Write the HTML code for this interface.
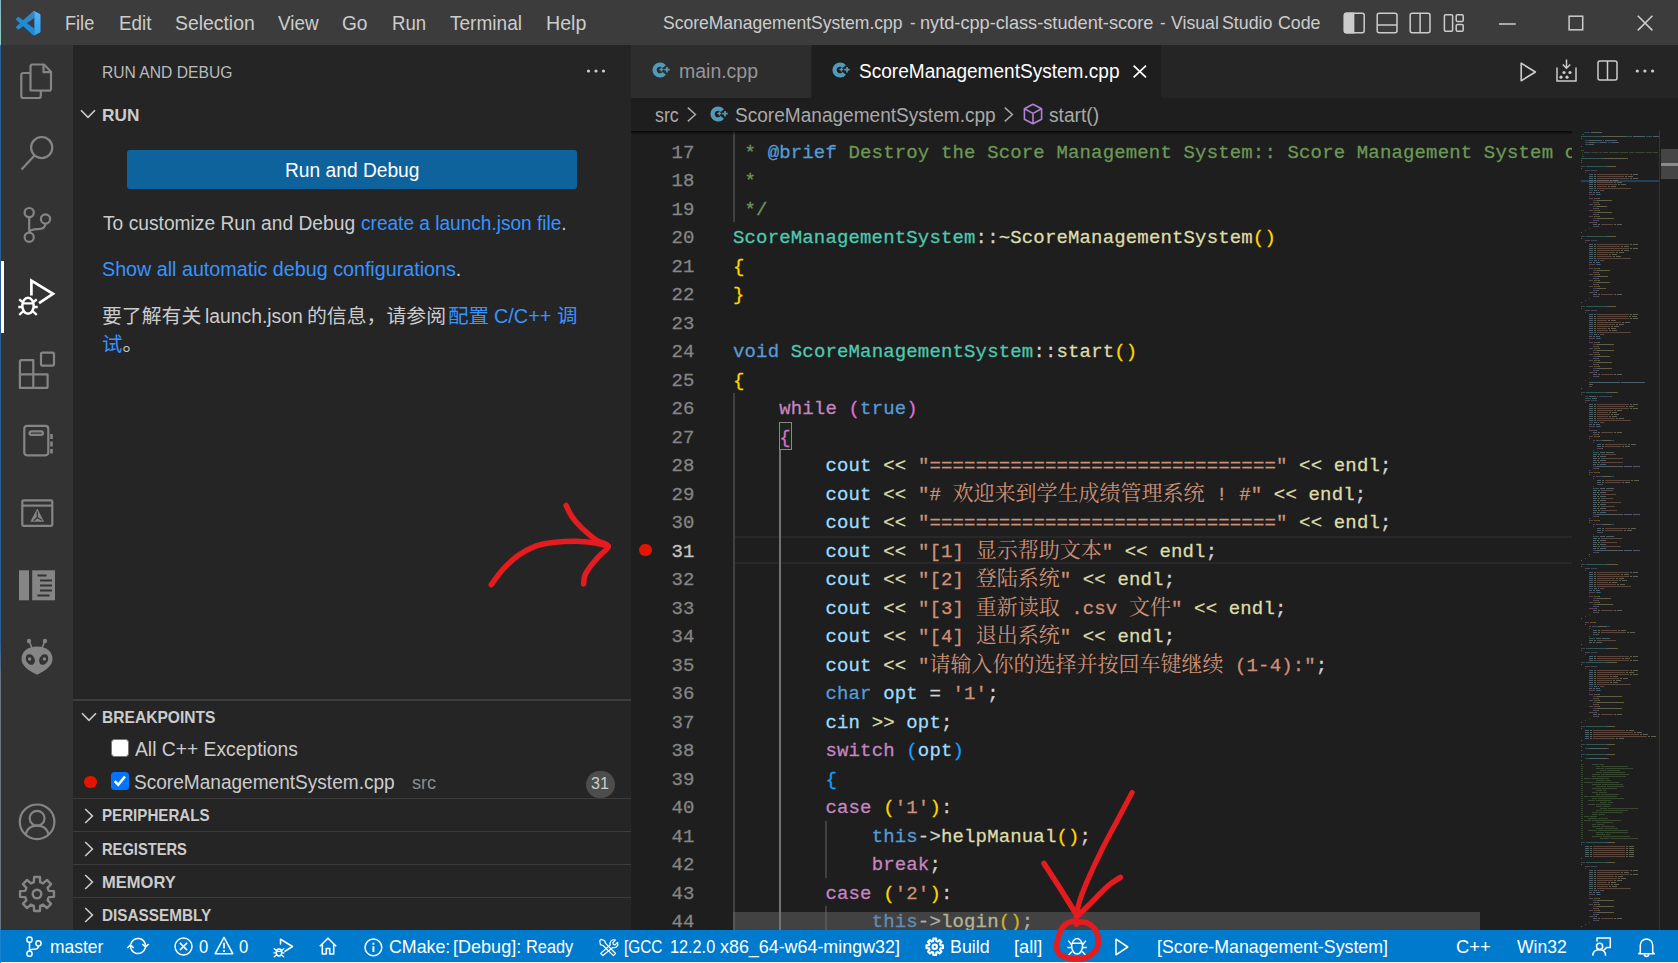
<!DOCTYPE html>
<html lang="en">
<head>
<meta charset="utf-8">
<title>ScoreManagementSystem.cpp - nytd-cpp-class-student-score - Visual Studio Code</title>
<style>
*{box-sizing:border-box;margin:0;padding:0}
html,body{width:1678px;height:963px;overflow:hidden;background:#fff}
body{font-family:"Liberation Sans","Noto Sans CJK SC",sans-serif;color:#ccc;-webkit-font-smoothing:antialiased}
#app{position:absolute;left:0;top:0;width:1678px;height:963px;overflow:hidden;background:#1e1e1e}
.abs{position:absolute}
.t{position:absolute;white-space:nowrap;line-height:1;transform-origin:0 0}
svg{position:absolute;overflow:visible}
/* title bar */
#titlebar{position:absolute;left:0;top:0;width:1678px;height:45px;background:#3c3c3c;z-index:5}
#titlebar .t{color:#cccccc;font-size:19.5px}
/* activity bar */
#activity{position:absolute;left:0;top:44px;width:73px;height:886px;background:#333333}
#winborder{z-index:6;position:absolute;left:0;top:0;width:1px;height:963px;background:linear-gradient(#86b3c6 0,#8fcdbf 44px,#2e5c96 46px,#2e5c96 640px,#6e7480 680px,#6e7480 925px,#1a80d0 931px)}
/* sidebar */
#sidebar{position:absolute;left:73px;top:44px;width:558px;height:886px;background:#252526}
#sidebar .hdr{font-weight:bold;font-size:16px;color:#cccccc}
#sidebar .sep{position:absolute;left:0;width:558px;height:1.5px;background:#3c3c3d}
a{color:#3794ff;text-decoration:none}
/* editor */
#tabs{position:absolute;left:631px;top:44px;width:1047px;height:54px;background:#252526}
#crumbs{position:absolute;left:631px;top:98px;width:1047px;height:33px;background:#1e1e1e}
#code{position:absolute;left:631px;top:131px;width:941px;height:799px;background:#1e1e1e;overflow:hidden}
.ln{position:absolute;left:0;width:941px;height:28.5px;line-height:28.5px;white-space:pre;font-family:"Liberation Mono","Noto Serif CJK SC",monospace;font-size:19px;letter-spacing:0.15px;-webkit-text-stroke:0.28px;color:#d4d4d4}
.ln .n{position:absolute;left:0;width:63.5px;text-align:right;color:#858585}
.ln .c{position:absolute;left:102px}
.zh{font-family:"Noto Serif CJK SC","Liberation Mono",serif;font-size:21px;line-height:1;letter-spacing:0;-webkit-text-stroke:0}
.cm{color:#6a9955}.kw{color:#569cd6}.ty{color:#4ec9b0}.fn{color:#dcdcaa}.ct{color:#c586c0}
.va{color:#9cdcfe}.st{color:#ce9178}.b1{color:#ffd700}.b2{color:#da70d6}.b3{color:#179fff}
.ig{position:absolute;width:1.5px;background:#404040}
/* status */
#status{position:absolute;left:0;top:930px;width:1678px;height:31.5px;background:#007acc}
#status .t{color:#ffffff;font-size:18px}
</style>
</head>
<body>
<div id="app">
<div id="titlebar">
<svg style="left:15.7px;top:10.7px" width="24.5" height="24.5" viewBox="0 0 100 100">
<defs><linearGradient id="vsg" x1="0" y1="0" x2="0" y2="1"><stop offset="0" stop-color="#52b4f5"/><stop offset="1" stop-color="#2aa2f6"/></linearGradient>
<linearGradient id="vsa" x1="1" y1="0" x2="0" y2="1"><stop offset="0" stop-color="#3a86bd"/><stop offset="1" stop-color="#1e8ad6"/></linearGradient></defs>
<path fill="url(#vsa)" d="M75.860.880a6.230 6.230 0 0 0-7.100 1.200L1.350 63.580a4.170 4.170 0 0 0 0 6.160l5.500 5.010a4.160 4.160 0 0 0 5.320.240L75 27.300Z"/>
<path fill="#1c8bdb" d="M1.350 36.420a4.170 4.170 0 0 1 0-6.160l5.500-5.010a4.160 4.160 0 0 1 5.320-.240L75 72.700l1 25-7.240.220Z"/>
<path fill="url(#vsg)" d="M68.760 97.920a6.220 6.220 0 0 0 7.100 1.200l20.600-9.900A6.250 6.250 0 0 0 100 83.580V16.420a6.250 6.250 0 0 0-3.540-5.630L75.860.880a6.230 6.230 0 0 0-7.100 1.200c1.500-1 3.500-.6 6.240 1.400v93.030c-3 2-5 2.600-6.240 1.400Z"/>
</svg>
<div class="t" style="left:65.47px;top:14.00px;font-size:19.5px;color:#cccccc;transform:scaleX(0.9300)">File</div>
<div class="t" style="left:118.73px;top:14.00px;font-size:19.5px;color:#cccccc;transform:scaleX(0.9667)">Edit</div>
<div class="t" style="left:175.01px;top:14.00px;font-size:19.5px;color:#cccccc;transform:scaleX(0.9936)">Selection</div>
<div class="t" style="left:278.00px;top:14.00px;font-size:19.5px;color:#cccccc;transform:scaleX(0.9690)">View</div>
<div class="t" style="left:342.02px;top:14.00px;font-size:19.5px;color:#cccccc;transform:scaleX(0.9800)">Go</div>
<div class="t" style="left:391.64px;top:14.00px;font-size:19.5px;color:#cccccc;transform:scaleX(0.9559)">Run</div>
<div class="t" style="left:450.20px;top:14.00px;font-size:19.5px;color:#cccccc;transform:scaleX(0.9767)">Terminal</div>
<div class="t" style="left:545.79px;top:14.00px;font-size:19.5px;color:#cccccc;transform:scaleX(1.0051)">Help</div>
<div class="t" style="left:663.25px;top:14.00px;font-size:18.5px;color:#cccccc;transform:scaleX(0.9468)">ScoreManagementSystem.cpp</div>
<div class="t" style="left:909.70px;top:14.00px;font-size:18.5px;color:#cccccc;transform:scaleX(0.9000)">-</div>
<div class="t" style="left:920.22px;top:14.00px;font-size:18.5px;color:#cccccc;transform:scaleX(0.9826)">nytd-cpp-class-student-score</div>
<div class="t" style="left:1159.80px;top:14.00px;font-size:18.5px;color:#cccccc;transform:scaleX(0.9000)">-</div>
<div class="t" style="left:1170.90px;top:14.00px;font-size:18.5px;color:#cccccc;transform:scaleX(0.9571)">Visual</div>
<div class="t" style="left:1222.04px;top:14.00px;font-size:18.5px;color:#cccccc;transform:scaleX(0.9608)">Studio</div>
<div class="t" style="left:1277.74px;top:14.00px;font-size:18.5px;color:#cccccc;transform:scaleX(0.9605)">Code</div>
<!-- layout controls -->
<svg style="left:1343px;top:12px" width="22" height="22" viewBox="0 0 22 22" fill="none" stroke="#cccccc" stroke-width="1.5">
<rect x="1.4" y="1.3" width="19.8" height="19.4" rx="2"/><path d="M1.4 3.3a2 2 0 0 1 2-2h7.2v19.4H3.4a2 2 0 0 1-2-2z" fill="#cccccc"/></svg>
<svg style="left:1376px;top:12px" width="22" height="22" viewBox="0 0 22 22" fill="none" stroke="#cccccc" stroke-width="1.5">
<rect x="1.2" y="1.3" width="19.8" height="19.4" rx="2"/><path d="M1.2 13h19.8"/></svg>
<svg style="left:1409px;top:12px" width="22" height="22" viewBox="0 0 22 22" fill="none" stroke="#cccccc" stroke-width="1.5">
<rect x="1.2" y="1.3" width="19.8" height="19.4" rx="2"/><path d="M11.1 1.3v19.4"/></svg>
<svg style="left:1443px;top:12px" width="22" height="22" viewBox="0 0 22 22" fill="none" stroke="#cccccc" stroke-width="1.5">
<rect x="1.4" y="2.8" width="8.2" height="16.4" rx="1.2"/><rect x="13.2" y="2.8" width="7" height="6.6" rx="1.2"/><rect x="13.2" y="12.6" width="7" height="6.6" rx="1.2"/></svg>
<!-- window controls -->
<svg style="left:1499px;top:14px" width="18" height="18" viewBox="0 0 18 18" fill="none" stroke="#cccccc" stroke-width="1.5"><path d="M0 10h16.8"/></svg>
<svg style="left:1568px;top:15px" width="16" height="16" viewBox="0 0 16 16" fill="none" stroke="#cccccc" stroke-width="1.5"><rect x="1.1" y="1.2" width="13.6" height="13.6"/></svg>
<svg style="left:1637px;top:15px" width="16" height="16" viewBox="0 0 16 16" fill="none" stroke="#cccccc" stroke-width="1.6"><path d="M0.8 0.8l14.6 14.6M15.4 0.8L0.8 15.4"/></svg>
</div>
<div id="activity">
<div class="abs" style="left:1px;top:217px;width:3px;height:72px;background:#ffffff"></div>
<!-- files -->
<svg style="left:19px;top:18px" width="36" height="38" viewBox="0 0 36 38" fill="none" stroke="#858585" stroke-width="2.2" stroke-linejoin="round">
<path d="M11.5 28.5V4.5a2 2 0 0 1 2-2H25l7 7.2v17a2 2 0 0 1-2 2z"/><path d="M24.5 2.8v7.4h7.2"/><path d="M11 11H4.3a2 2 0 0 0-2 2v21a2 2 0 0 0 2 2h15.5a2 2 0 0 0 2-2v-5"/></svg>
<!-- search -->
<svg style="left:19px;top:90px" width="38" height="38" viewBox="0 0 38 38" fill="none" stroke="#858585" stroke-width="2.2">
<circle cx="22.7" cy="13.6" r="10.6"/><path d="M15.5 21.5L2.5 35.5"/></svg>
<!-- scm -->
<svg style="left:19px;top:162px" width="36" height="40" viewBox="0 0 36 40" fill="none" stroke="#858585" stroke-width="2.2">
<circle cx="10.2" cy="6.6" r="4.6"/><circle cx="26.5" cy="13" r="4.6"/><circle cx="10.2" cy="31.3" r="4.6"/><path d="M10.2 11.2v15.5M26.5 17.6c0 4.5-3.5 5.6-8 5.6s-8.3 .8-8.3 3.5"/></svg>
<!-- debug (active) -->
<svg style="left:17px;top:232px" width="40" height="44" viewBox="0 0 40 44" fill="none" stroke="#ffffff" stroke-width="2.700" stroke-linejoin="miter" stroke-linecap="butt">
<path d="M14.400 19.500V4.600L36 17.800 22 27.200"/>
<ellipse cx="11" cy="29.800" rx="5.700" ry="8" stroke-width="2.500"/><path d="M5.800 27.300h10.400M2.200 23.300l4 3.200M19.800 23.300l-4 3.200M1.300 31h4.200M16.500 31h4.200M2.200 38.800l4.200-3.600M19.800 38.800l-4.200-3.600" stroke-width="2.300"/></svg>
<!-- extensions -->
<svg style="left:18px;top:305px" width="40" height="40" viewBox="0 0 40 40" fill="none" stroke="#858585" stroke-width="2.2" stroke-linejoin="round">
<path d="M15.3 11.2H3.4a1.5 1.5 0 0 0-1.5 1.5v26.2h26.2a1.5 1.5 0 0 0 1.500-1.500V25.300H15.300zM15.300 25.300H1.900M15.300 25.300v13.600"/><rect x="23" y="3.600" width="13" height="13" rx="1.500"/></svg>
<!-- notebook -->
<svg style="left:22px;top:379px" width="34" height="36" viewBox="0 0 34 36" fill="none" stroke="#858585" stroke-width="2.2">
<rect x="2.300" y="2.800" width="24" height="29.500" rx="3"/><rect x="7.500" y="8.300" width="13.500" height="3.600" rx="1.800"/><path d="M29.500 11v5M29.500 18.500v5M29.500 26v4.500" stroke-width="2.600"/></svg>
<!-- cmake -->
<svg style="left:20px;top:454px" width="36" height="30" viewBox="0 0 36 30" fill="none" stroke="#858585" stroke-width="2.200">
<rect x="2.300" y="2.300" width="30" height="25.500" rx="1.500"/><path d="M2.300 7.600h30"/><path d="M17.300 10.500l6.800 13.300H10.300z" fill="#858585" stroke="none"/><path d="M17.300 13.500v6l-3.500 3.200M17.300 19.500l4.500 2.800" stroke="#333333" stroke-width="1.200"/></svg>
<!-- book -->
<svg style="left:19px;top:526px" width="38" height="32" viewBox="0 0 38 32" fill="#858585" stroke="none">
<rect x="0" y="0.300" width="10" height="30"/><rect x="13.200" y="0.300" width="22.800" height="30"/><path d="M18.500 5.500h9M21 10.500h12M21 15.500h12M21 20.500h12M18.500 25.500h12" stroke="#333333" stroke-width="2.200"/></svg>
<!-- platformio -->
<svg style="left:20px;top:594px" width="34" height="38" viewBox="0 0 34 38" fill="#858585" stroke="none">
<path d="M17 8.500c9.500 0 15.500 5 15.500 12.500 0 6-6 11.500-15.500 15.700C7.500 32.500 1.500 27 1.500 21 1.500 13.500 7.500 8.500 17 8.500z"/><circle cx="9" cy="3" r="2.200"/><circle cx="25" cy="3" r="2.200"/><path d="M9 3l3 7M25 3l-3 7" stroke="#858585" stroke-width="1.600"/>
<ellipse cx="10.300" cy="21.500" rx="4.200" ry="5.600" transform="rotate(-28 10.300 21.500)" fill="#333333"/><ellipse cx="23.700" cy="21.500" rx="4.200" ry="5.600" transform="rotate(28 23.700 21.500)" fill="#333333"/><circle cx="9.600" cy="21" r="1.700"/><circle cx="24.400" cy="21" r="1.700"/></svg>
<!-- account -->
<svg style="left:17px;top:758px" width="40" height="40" viewBox="0 0 40 40" fill="none" stroke="#858585" stroke-width="2.200">
<circle cx="20.100" cy="19.800" r="17.300"/><circle cx="20.100" cy="16.200" r="7.400"/><path d="M8.500 32.500c1.500-6 6-8.900 11.600-8.900s10.100 2.900 11.600 8.900"/></svg>
<!-- gear -->
<svg style="left:17.100px;top:829.700px" width="40" height="40" viewBox="-20 -20 40 40" fill="none" stroke="#858585" stroke-width="2.400" stroke-linejoin="round">
<path d="M-3.14 -11.79L-2.91 -16.95L2.91 -16.95L3.14 -11.79L6.12 -10.55L9.93 -14.04L14.04 -9.93L10.55 -6.12L11.79 -3.14L16.95 -2.91L16.95 2.91L11.79 3.14L10.55 6.12L14.04 9.93L9.93 14.04L6.12 10.55L3.14 11.79L2.91 16.95L-2.91 16.95L-3.14 11.79L-6.12 10.55L-9.93 14.04L-14.04 9.93L-10.55 6.12L-11.79 3.14L-16.95 2.91L-16.95 -2.91L-11.79 -3.14L-10.55 -6.12L-14.04 -9.93L-9.93 -14.04L-6.12 -10.55Z"/>
<circle cx="0" cy="0" r="4.300"/></svg>
</div>
<div id="winborder"></div>
<div id="sidebar">
<!-- header dots -->
<svg style="left:513px;top:23px" width="20" height="8" viewBox="0 0 20 8" fill="#cccccc"><circle cx="2.500" cy="4" r="1.600"/><circle cx="10" cy="4" r="1.600"/><circle cx="17.500" cy="4" r="1.600"/></svg>
<!-- RUN chevron -->
<svg style="left:7px;top:65px" width="16" height="10" viewBox="0 0 16 10" fill="none" stroke="#cccccc" stroke-width="1.600"><path d="M1 1.200l7 7.200 7-7.200"/></svg>
<div class="abs" style="left:54px;top:106px;width:450px;height:38.700px;background:#0e639c;border-radius:3px"></div>
<!-- breakpoints -->
<div class="sep" style="top:655px"></div>
<svg style="left:7.500px;top:668px" width="16" height="10" viewBox="0 0 16 10" fill="none" stroke="#cccccc" stroke-width="1.600"><path d="M1 1.200l7 7.200 7-7.200"/></svg>
<div class="abs" style="left:38.300px;top:695.300px;width:17.700px;height:17.700px;background:#ffffff;border:1.500px solid #767676;border-radius:3.500px"></div>
<div class="abs" style="left:11.300px;top:731.800px;width:12.600px;height:12.600px;border-radius:50%;background:#e51400"></div>
<div class="abs" style="left:38.300px;top:728.200px;width:17.700px;height:17.700px;background:#0075ff;border-radius:3.500px"></div>
<svg style="left:38.300px;top:728.200px" width="17.700" height="17.700" viewBox="0 0 18 18" fill="none" stroke="#ffffff" stroke-width="2.600"><path d="M3.800 9.200l3.600 3.800 6.800-8.400"/></svg>
<div class="abs" style="left:513px;top:726.500px;width:29px;height:27px;border-radius:13.500px;background:#4d4d4d"></div>
<div class="sep" style="top:753.700px"></div>
<svg style="left:11px;top:763.500px" width="10" height="16" viewBox="0 0 10 16" fill="none" stroke="#cccccc" stroke-width="1.600"><path d="M1.200 1l7.200 7-7.200 7"/></svg>
<div class="sep" style="top:786.700px"></div>
<svg style="left:11px;top:796.500px" width="10" height="16" viewBox="0 0 10 16" fill="none" stroke="#cccccc" stroke-width="1.600"><path d="M1.200 1l7.200 7-7.200 7"/></svg>
<div class="sep" style="top:819.700px"></div>
<svg style="left:11px;top:829.500px" width="10" height="16" viewBox="0 0 10 16" fill="none" stroke="#cccccc" stroke-width="1.600"><path d="M1.200 1l7.200 7-7.200 7"/></svg>
<div class="sep" style="top:852.700px"></div>
<svg style="left:11px;top:862.500px" width="10" height="16" viewBox="0 0 10 16" fill="none" stroke="#cccccc" stroke-width="1.600"><path d="M1.200 1l7.200 7-7.200 7"/></svg>
</div>
<div class="t" style="left:102.35px;top:64.00px;font-size:16.5px;color:#bbbbbb;transform:scaleX(0.9478)">RUN AND DEBUG</div>
<div class="t" style="left:102.26px;top:107.00px;font-size:16.5px;color:#cccccc;transform:scaleX(1.0441);font-weight:700">RUN</div>
<div class="t" style="left:284.82px;top:161.00px;font-size:19.5px;color:#ffffff;transform:scaleX(0.9844)">Run and Debug</div>
<div class="t" style="left:103.30px;top:214.00px;font-size:19.5px;color:#cccccc;transform:scaleX(0.9855)">To customize Run and Debug</div>
<div class="t" style="left:360.80px;top:214.00px;font-size:19.5px;color:#cccccc;transform:scaleX(0.9780)"><a>create a launch.json file</a>.</div>
<div class="t" style="left:102.29px;top:260.00px;font-size:19.5px;color:#cccccc;transform:scaleX(1.0105)"><a>Show all automatic debug configurations</a>.</div>
<div class="t" style="left:102.28px;top:307.00px;font-size:19.5px;color:#cccccc;transform:scaleX(1.0188)">要了解有关</div>
<div class="t" style="left:204.91px;top:307.00px;font-size:19.5px;color:#cccccc;transform:scaleX(0.9907)">launch.json</div>
<div class="t" style="left:306.78px;top:307.00px;font-size:19.5px;color:#cccccc;transform:scaleX(1.0187)">的信息，请参阅</div>
<div class="t" style="left:448.35px;top:307.00px;font-size:19.5px;color:#3794ff;transform:scaleX(1.0541)">配置</div>
<div class="t" style="left:493.58px;top:307.00px;font-size:19.5px;color:#3794ff;transform:scaleX(1.0182)">C/C++</div>
<div class="t" style="left:557.40px;top:307.00px;font-size:19.5px;color:#3794ff;transform:scaleX(1.0500)">调</div>
<div class="t" style="left:102.25px;top:335.00px;font-size:19.5px;color:#cccccc;transform:scaleX(1.0462)"><a>试</a>。</div>
<div class="t" style="left:102.36px;top:709.00px;font-size:16.5px;color:#cccccc;transform:scaleX(0.9445);font-weight:700">BREAKPOINTS</div>
<div class="t" style="left:134.60px;top:740.00px;font-size:19.5px;color:#cccccc;transform:scaleX(0.9890)">All C++ Exceptions</div>
<div class="t" style="left:133.62px;top:773.00px;font-size:19.5px;color:#cccccc;transform:scaleX(0.9777)">ScoreManagementSystem.cpp</div>
<div class="t" style="left:411.70px;top:775.00px;font-size:17.5px;color:#8e8e8e;transform:scaleX(1.0348)">src</div>
<div class="t" style="left:591.40px;top:775.00px;font-size:16.5px;color:#cccccc;transform:scaleX(0.9778)">31</div>
<div class="t" style="left:102.38px;top:807.00px;font-size:16.5px;color:#cccccc;transform:scaleX(0.9172);font-weight:700">PERIPHERALS</div>
<div class="t" style="left:102.41px;top:841.00px;font-size:16.5px;color:#cccccc;transform:scaleX(0.8894);font-weight:700">REGISTERS</div>
<div class="t" style="left:102.30px;top:874.00px;font-size:16.5px;color:#cccccc;transform:scaleX(1.0014);font-weight:700">MEMORY</div>
<div class="t" style="left:102.37px;top:907.00px;font-size:16.5px;color:#cccccc;transform:scaleX(0.9282);font-weight:700">DISASSEMBLY</div>
<div id="tabs">
<div class="abs" style="left:0;top:1px;width:179.700px;height:52.500px;background:#2d2d2d"></div>
<div class="abs" style="left:180.700px;top:1px;width:349px;height:53px;background:#1e1e1e"></div>
<!-- cpp icons -->
<svg style="left:21.300px;top:18.300px" width="19" height="16" viewBox="0 0 19 16"><path d="M12.290 4.640A5.450 5.450 0 1 0 12.290 11.360" fill="none" stroke="#519aba" stroke-width="4.300"/><path d="M7.400 7.500h4M9.400 5.500v4" stroke="#519aba" stroke-width="1.300"/><path d="M12.300 7.700h5.400M15 5v5.400" stroke="#519aba" stroke-width="1.700"/></svg>
<svg style="left:201.400px;top:18.300px" width="19" height="16" viewBox="0 0 19 16"><path d="M12.290 4.640A5.450 5.450 0 1 0 12.290 11.360" fill="none" stroke="#519aba" stroke-width="4.300"/><path d="M7.400 7.500h4M9.400 5.500v4" stroke="#519aba" stroke-width="1.300"/><path d="M12.300 7.700h5.400M15 5v5.400" stroke="#519aba" stroke-width="1.700"/></svg>
<!-- close -->
<svg style="left:502.400px;top:21.300px" width="14" height="13" viewBox="0 0 14 13" fill="none" stroke="#ffffff" stroke-width="1.700"><path d="M0.600 0.600l12.400 11.800M13 0.600L0.600 12.400"/></svg>
<!-- actions -->
<svg style="left:889px;top:17.500px" width="17" height="20" viewBox="0 0 17 20" fill="none" stroke="#cccccc" stroke-width="1.600" stroke-linejoin="round"><path d="M1.200 1.200v17.600L15.400 10z"/></svg>
<svg style="left:925px;top:14.500px" width="21" height="24" viewBox="0 0 21 24" fill="none" stroke="#cccccc" stroke-width="1.500"><path d="M1 8.500v13.500h19V8.500"/><path d="M10.500 0.500v8.500M6.800 5.500l3.700 3.700 3.700-3.700"/><g fill="#cccccc" stroke="none"><circle cx="8" cy="13.500" r="1.600"/><circle cx="14" cy="13.500" r="1.600"/><circle cx="5" cy="18.200" r="1.600"/><circle cx="11" cy="18.200" r="1.600"/></g></svg>
<svg style="left:965.500px;top:16px" width="21" height="21" viewBox="0 0 21 21" fill="none" stroke="#cccccc" stroke-width="1.500"><rect x="1" y="1" width="19" height="19" rx="2"/><path d="M10.500 1v19"/></svg>
<svg style="left:1004px;top:24px" width="20" height="6" viewBox="0 0 20 6" fill="#cccccc"><circle cx="2.300" cy="3" r="1.600"/><circle cx="9.900" cy="3" r="1.600"/><circle cx="17.600" cy="3" r="1.600"/></svg>
</div>
<div id="crumbs">
<svg style="left:56px;top:8.600px" width="10" height="15" viewBox="0 0 10 15" fill="none" stroke="#a9a9a9" stroke-width="1.500"><path d="M0.800 0.600l7.600 6.900-7.600 6.900"/></svg>
<svg style="left:78.700px;top:8.150px" width="19" height="16" viewBox="0 0 19 16"><path d="M12.290 4.640A5.450 5.450 0 1 0 12.290 11.360" fill="none" stroke="#519aba" stroke-width="4.300"/><path d="M7.400 7.500h4M9.400 5.500v4" stroke="#519aba" stroke-width="1.300"/><path d="M12.300 7.700h5.400M15 5v5.400" stroke="#519aba" stroke-width="1.700"/></svg>
<svg style="left:373px;top:8.600px" width="10" height="15" viewBox="0 0 10 15" fill="none" stroke="#a9a9a9" stroke-width="1.500"><path d="M0.800 0.600l7.600 6.900-7.600 6.900"/></svg>
<svg style="left:391.500px;top:5px" width="20" height="22" viewBox="0 0 20 22" fill="none" stroke="#b180d7" stroke-width="1.600" stroke-linejoin="round"><path d="M10 1.200L18.600 5.800v10.400L10 20.800 1.400 16.200V5.800z"/><path d="M1.400 5.800L10 10.400l8.600-4.600M10 10.400v10.400"/></svg>
</div>

<div id="code">
<div class="abs" style="left:102px;top:404.75px;width:839px;height:28.5px;border-top:2px solid #282828;border-bottom:2px solid #282828"></div>
<div class="ig" style="left:102px;top:-22.75px;height:114.00px;background:#404040"></div>
<div class="ig" style="left:102px;top:262.25px;height:541.50px;background:#404040"></div>
<div class="ig" style="left:148.2px;top:319.25px;height:484.50px;background:#707070"></div>
<div class="ig" style="left:194.4px;top:689.75px;height:57.00px;background:#404040"></div>
<div class="ig" style="left:194.4px;top:775.25px;height:28.50px;background:#404040"></div>
<div class="abs" style="left:148px;top:290.75px;width:12.500px;height:28.500px;border:1px solid #888888;background:rgba(0,100,0,0.1)"></div>
<div class="abs" style="left:8.300px;top:412.75px;width:12.600px;height:12.600px;border-radius:50%;background:#e51400"></div>
<div class="ln" style="top:7.90px"><span class="n">17</span><span class="c"><span class="cm"> * </span><span class="kw">@brief</span><span class="cm"> Destroy the Score Management System:: Score Management System c</span></span></div>
<div class="ln" style="top:36.40px"><span class="n">18</span><span class="c"><span class="cm"> *</span></span></div>
<div class="ln" style="top:64.90px"><span class="n">19</span><span class="c"><span class="cm"> */</span></span></div>
<div class="ln" style="top:93.40px"><span class="n">20</span><span class="c"><span class="ty">ScoreManagementSystem</span>::<span class="fn">~ScoreManagementSystem</span><span class="b1">()</span></span></div>
<div class="ln" style="top:121.90px"><span class="n">21</span><span class="c"><span class="b1">{</span></span></div>
<div class="ln" style="top:150.40px"><span class="n">22</span><span class="c"><span class="b1">}</span></span></div>
<div class="ln" style="top:178.90px"><span class="n">23</span><span class="c"></span></div>
<div class="ln" style="top:207.40px"><span class="n">24</span><span class="c"><span class="kw">void</span> <span class="ty">ScoreManagementSystem</span>::<span class="fn">start</span><span class="b1">()</span></span></div>
<div class="ln" style="top:235.90px"><span class="n">25</span><span class="c"><span class="b1">{</span></span></div>
<div class="ln" style="top:264.40px"><span class="n">26</span><span class="c">    <span class="ct">while</span> <span class="b2">(</span><span class="kw">true</span><span class="b2">)</span></span></div>
<div class="ln" style="top:292.90px"><span class="n">27</span><span class="c">    <span class="b2">{</span></span></div>
<div class="ln" style="top:321.40px"><span class="n">28</span><span class="c">        <span class="va">cout</span> <span class="fn">&lt;&lt;</span> <span class="st">"=============================="</span> <span class="fn">&lt;&lt;</span> <span class="fn">endl</span>;</span></div>
<div class="ln" style="top:349.90px"><span class="n">29</span><span class="c">        <span class="va">cout</span> <span class="fn">&lt;&lt;</span> <span class="st">"# <span class="zh">欢迎来到学生成绩管理系统</span> ! #"</span> <span class="fn">&lt;&lt;</span> <span class="fn">endl</span>;</span></div>
<div class="ln" style="top:378.40px"><span class="n">30</span><span class="c">        <span class="va">cout</span> <span class="fn">&lt;&lt;</span> <span class="st">"=============================="</span> <span class="fn">&lt;&lt;</span> <span class="fn">endl</span>;</span></div>
<div class="ln" style="top:406.90px"><span class="n" style="color:#c6c6c6">31</span><span class="c">        <span class="va">cout</span> <span class="fn">&lt;&lt;</span> <span class="st">"[1] <span class="zh">显示帮助文本</span>"</span> <span class="fn">&lt;&lt;</span> <span class="fn">endl</span>;</span></div>
<div class="ln" style="top:435.40px"><span class="n">32</span><span class="c">        <span class="va">cout</span> <span class="fn">&lt;&lt;</span> <span class="st">"[2] <span class="zh">登陆系统</span>"</span> <span class="fn">&lt;&lt;</span> <span class="fn">endl</span>;</span></div>
<div class="ln" style="top:463.90px"><span class="n">33</span><span class="c">        <span class="va">cout</span> <span class="fn">&lt;&lt;</span> <span class="st">"[3] <span class="zh">重新读取</span> .csv <span class="zh">文件</span>"</span> <span class="fn">&lt;&lt;</span> <span class="fn">endl</span>;</span></div>
<div class="ln" style="top:492.40px"><span class="n">34</span><span class="c">        <span class="va">cout</span> <span class="fn">&lt;&lt;</span> <span class="st">"[4] <span class="zh">退出系统</span>"</span> <span class="fn">&lt;&lt;</span> <span class="fn">endl</span>;</span></div>
<div class="ln" style="top:520.90px"><span class="n">35</span><span class="c">        <span class="va">cout</span> <span class="fn">&lt;&lt;</span> <span class="st">"<span class="zh">请输入你的选择并按回车键继续</span> (1-4):"</span>;</span></div>
<div class="ln" style="top:549.40px"><span class="n">36</span><span class="c">        <span class="kw">char</span> <span class="va">opt</span> = <span class="st">'1'</span>;</span></div>
<div class="ln" style="top:577.90px"><span class="n">37</span><span class="c">        <span class="va">cin</span> <span class="fn">&gt;&gt;</span> <span class="va">opt</span>;</span></div>
<div class="ln" style="top:606.40px"><span class="n">38</span><span class="c">        <span class="ct">switch</span> <span class="b3">(</span><span class="va">opt</span><span class="b3">)</span></span></div>
<div class="ln" style="top:634.90px"><span class="n">39</span><span class="c">        <span class="b3">{</span></span></div>
<div class="ln" style="top:663.40px"><span class="n">40</span><span class="c">        <span class="ct">case</span> <span class="b1">(</span><span class="st">'1'</span><span class="b1">)</span>:</span></div>
<div class="ln" style="top:691.90px"><span class="n">41</span><span class="c">            <span class="kw">this</span>-&gt;<span class="fn">helpManual</span><span class="b1">()</span>;</span></div>
<div class="ln" style="top:720.40px"><span class="n">42</span><span class="c">            <span class="ct">break</span>;</span></div>
<div class="ln" style="top:748.90px"><span class="n">43</span><span class="c">        <span class="ct">case</span> <span class="b1">(</span><span class="st">'2'</span><span class="b1">)</span>:</span></div>
<div class="ln" style="top:777.40px"><span class="n">44</span><span class="c">            <span class="kw">this</span>-&gt;<span class="fn">login</span><span class="b1">()</span>;</span></div>
<div class="abs" style="left:0;top:0;width:941px;height:4px;background:linear-gradient(rgba(0,0,0,0.75),rgba(0,0,0,0))"></div>
<div class="abs" style="left:102px;top:781px;width:747px;height:18px;background:rgba(121,121,121,0.400)"></div>
</div>
<div class="t" style="left:678.80px;top:62.00px;font-size:19.5px;color:#969696;transform:scaleX(0.9987)">main.cpp</div>
<div class="t" style="left:858.52px;top:62.00px;font-size:19.5px;color:#ffffff;transform:scaleX(0.9770)">ScoreManagementSystem.cpp</div>
<div class="t" style="left:655.00px;top:106.00px;font-size:19.5px;color:#a9a9a9;transform:scaleX(0.9154)">src</div>
<div class="t" style="left:735.42px;top:106.00px;font-size:19.5px;color:#a9a9a9;transform:scaleX(0.9777)">ScoreManagementSystem.cpp</div>
<div class="t" style="left:1048.80px;top:106.00px;font-size:19.5px;color:#a9a9a9;transform:scaleX(0.9840)">start()</div>
<div id="minimap" class="abs" style="left:1573px;top:131px;width:86px;height:799px;background:#1e1e1e;overflow:hidden">
<svg style="left:0;top:0" width="86" height="799" viewBox="0 0 86 799" shape-rendering="crispEdges">
<rect x="8" y="48.500" width="78" height="2" fill="#233f5d"/>
<g opacity="0.340">
<rect x="11" y="1" width="6" height="1.400" fill="#569cd6"/>
<rect x="18" y="1" width="11" height="1.400" fill="#d4d4d4"/>
<rect x="9" y="3" width="2" height="1.400" fill="#6a9955"/>
<rect x="8" y="5" width="21" height="1.400" fill="#4ec9b0"/>
<rect x="29" y="5" width="2" height="1.400" fill="#d4d4d4"/>
<rect x="31" y="5" width="21" height="1.400" fill="#dcdcaa"/>
<rect x="52" y="5" width="1" height="1.400" fill="#ffd700"/>
<rect x="53" y="5" width="6" height="1.400" fill="#4ec9b0"/>
<rect x="60" y="5" width="12" height="1.400" fill="#9cdcfe"/>
<rect x="73" y="5" width="6" height="1.400" fill="#4ec9b0"/>
<rect x="80" y="5" width="6" height="1.400" fill="#9cdcfe"/>
<rect x="8" y="7" width="1" height="1.400" fill="#ffd700"/>
<rect x="12" y="9" width="4" height="1.400" fill="#569cd6"/>
<rect x="16" y="9" width="2" height="1.400" fill="#d4d4d4"/>
<rect x="18" y="9" width="11" height="1.400" fill="#9cdcfe"/>
<rect x="30" y="9" width="1" height="1.400" fill="#d4d4d4"/>
<rect x="32" y="9" width="11" height="1.400" fill="#9cdcfe"/>
<rect x="43" y="9" width="1" height="1.400" fill="#d4d4d4"/>
<rect x="12" y="11" width="4" height="1.400" fill="#569cd6"/>
<rect x="16" y="11" width="2" height="1.400" fill="#d4d4d4"/>
<rect x="18" y="11" width="4" height="1.400" fill="#dcdcaa"/>
<rect x="22" y="11" width="1" height="1.400" fill="#da70d6"/>
<rect x="23" y="11" width="4" height="1.400" fill="#569cd6"/>
<rect x="27" y="11" width="2" height="1.400" fill="#d4d4d4"/>
<rect x="29" y="11" width="5" height="1.400" fill="#9cdcfe"/>
<rect x="35" y="11" width="4" height="1.400" fill="#569cd6"/>
<rect x="39" y="11" width="2" height="1.400" fill="#d4d4d4"/>
<rect x="41" y="11" width="4" height="1.400" fill="#9cdcfe"/>
<rect x="45" y="11" width="1" height="1.400" fill="#da70d6"/>
<rect x="12" y="13" width="4" height="1.400" fill="#569cd6"/>
<rect x="16" y="13" width="2" height="1.400" fill="#d4d4d4"/>
<rect x="18" y="13" width="2" height="1.400" fill="#9cdcfe"/>
<rect x="20" y="13" width="1" height="1.400" fill="#d4d4d4"/>
<rect x="8" y="15" width="1" height="1.400" fill="#ffd700"/>
<rect x="8" y="19" width="3" height="1.400" fill="#6a9955"/>
<rect x="9" y="21" width="1" height="1.400" fill="#6a9955"/>
<rect x="11" y="21" width="6" height="1.400" fill="#569cd6"/>
<rect x="18" y="21" width="7" height="1.400" fill="#6a9955"/>
<rect x="26" y="21" width="3" height="1.400" fill="#6a9955"/>
<rect x="30" y="21" width="5" height="1.400" fill="#6a9955"/>
<rect x="36" y="21" width="10" height="1.400" fill="#6a9955"/>
<rect x="47" y="21" width="8" height="1.400" fill="#6a9955"/>
<rect x="56" y="21" width="5" height="1.400" fill="#6a9955"/>
<rect x="62" y="21" width="10" height="1.400" fill="#6a9955"/>
<rect x="73" y="21" width="6" height="1.400" fill="#6a9955"/>
<rect x="80" y="21" width="5" height="1.400" fill="#6a9955"/>
<rect x="9" y="23" width="1" height="1.400" fill="#6a9955"/>
<rect x="9" y="25" width="2" height="1.400" fill="#6a9955"/>
<rect x="8" y="27" width="21" height="1.400" fill="#4ec9b0"/>
<rect x="29" y="27" width="2" height="1.400" fill="#d4d4d4"/>
<rect x="31" y="27" width="22" height="1.400" fill="#dcdcaa"/>
<rect x="53" y="27" width="2" height="1.400" fill="#ffd700"/>
<rect x="8" y="29" width="1" height="1.400" fill="#ffd700"/>
<rect x="8" y="31" width="1" height="1.400" fill="#ffd700"/>
<rect x="8" y="35" width="4" height="1.400" fill="#569cd6"/>
<rect x="13" y="35" width="21" height="1.400" fill="#4ec9b0"/>
<rect x="34" y="35" width="2" height="1.400" fill="#d4d4d4"/>
<rect x="36" y="35" width="5" height="1.400" fill="#dcdcaa"/>
<rect x="41" y="35" width="2" height="1.400" fill="#ffd700"/>
<rect x="8" y="37" width="1" height="1.400" fill="#ffd700"/>
<rect x="12" y="39" width="5" height="1.400" fill="#c586c0"/>
<rect x="18" y="39" width="1" height="1.400" fill="#da70d6"/>
<rect x="19" y="39" width="4" height="1.400" fill="#569cd6"/>
<rect x="23" y="39" width="1" height="1.400" fill="#da70d6"/>
<rect x="12" y="41" width="1" height="1.400" fill="#da70d6"/>
<rect x="16" y="43" width="4" height="1.400" fill="#9cdcfe"/>
<rect x="21" y="43" width="2" height="1.400" fill="#dcdcaa"/>
<rect x="24" y="43" width="32" height="1.400" fill="#ce9178"/>
<rect x="57" y="43" width="2" height="1.400" fill="#dcdcaa"/>
<rect x="60" y="43" width="4" height="1.400" fill="#dcdcaa"/>
<rect x="64" y="43" width="1" height="1.400" fill="#d4d4d4"/>
<rect x="16" y="45" width="4" height="1.400" fill="#9cdcfe"/>
<rect x="21" y="45" width="2" height="1.400" fill="#dcdcaa"/>
<rect x="24" y="45" width="27" height="1.400" fill="#ce9178"/>
<rect x="52" y="45" width="2" height="1.400" fill="#dcdcaa"/>
<rect x="55" y="45" width="4" height="1.400" fill="#dcdcaa"/>
<rect x="59" y="45" width="1" height="1.400" fill="#d4d4d4"/>
<rect x="16" y="47" width="4" height="1.400" fill="#9cdcfe"/>
<rect x="21" y="47" width="2" height="1.400" fill="#dcdcaa"/>
<rect x="24" y="47" width="32" height="1.400" fill="#ce9178"/>
<rect x="57" y="47" width="2" height="1.400" fill="#dcdcaa"/>
<rect x="60" y="47" width="4" height="1.400" fill="#dcdcaa"/>
<rect x="64" y="47" width="1" height="1.400" fill="#d4d4d4"/>
<rect x="16" y="49" width="4" height="1.400" fill="#9cdcfe"/>
<rect x="21" y="49" width="2" height="1.400" fill="#dcdcaa"/>
<rect x="24" y="49" width="12" height="1.400" fill="#ce9178"/>
<rect x="37" y="49" width="2" height="1.400" fill="#dcdcaa"/>
<rect x="40" y="49" width="4" height="1.400" fill="#dcdcaa"/>
<rect x="44" y="49" width="1" height="1.400" fill="#d4d4d4"/>
<rect x="16" y="51" width="4" height="1.400" fill="#9cdcfe"/>
<rect x="21" y="51" width="2" height="1.400" fill="#dcdcaa"/>
<rect x="24" y="51" width="16" height="1.400" fill="#ce9178"/>
<rect x="41" y="51" width="2" height="1.400" fill="#dcdcaa"/>
<rect x="44" y="51" width="4" height="1.400" fill="#dcdcaa"/>
<rect x="48" y="51" width="1" height="1.400" fill="#d4d4d4"/>
<rect x="16" y="53" width="4" height="1.400" fill="#9cdcfe"/>
<rect x="21" y="53" width="2" height="1.400" fill="#dcdcaa"/>
<rect x="24" y="53" width="20" height="1.400" fill="#ce9178"/>
<rect x="45" y="53" width="2" height="1.400" fill="#dcdcaa"/>
<rect x="48" y="53" width="4" height="1.400" fill="#dcdcaa"/>
<rect x="52" y="53" width="1" height="1.400" fill="#d4d4d4"/>
<rect x="16" y="55" width="4" height="1.400" fill="#9cdcfe"/>
<rect x="21" y="55" width="2" height="1.400" fill="#dcdcaa"/>
<rect x="24" y="55" width="10" height="1.400" fill="#ce9178"/>
<rect x="35" y="55" width="2" height="1.400" fill="#dcdcaa"/>
<rect x="38" y="55" width="4" height="1.400" fill="#dcdcaa"/>
<rect x="42" y="55" width="1" height="1.400" fill="#d4d4d4"/>
<rect x="16" y="57" width="4" height="1.400" fill="#9cdcfe"/>
<rect x="21" y="57" width="2" height="1.400" fill="#dcdcaa"/>
<rect x="24" y="57" width="34" height="1.400" fill="#ce9178"/>
<rect x="16" y="59" width="4" height="1.400" fill="#569cd6"/>
<rect x="21" y="59" width="3" height="1.400" fill="#9cdcfe"/>
<rect x="25" y="59" width="1" height="1.400" fill="#d4d4d4"/>
<rect x="27" y="59" width="3" height="1.400" fill="#ce9178"/>
<rect x="30" y="59" width="1" height="1.400" fill="#d4d4d4"/>
<rect x="16" y="61" width="3" height="1.400" fill="#9cdcfe"/>
<rect x="20" y="61" width="2" height="1.400" fill="#dcdcaa"/>
<rect x="23" y="61" width="3" height="1.400" fill="#9cdcfe"/>
<rect x="26" y="61" width="1" height="1.400" fill="#d4d4d4"/>
<rect x="16" y="63" width="6" height="1.400" fill="#c586c0"/>
<rect x="23" y="63" width="1" height="1.400" fill="#179fff"/>
<rect x="24" y="63" width="3" height="1.400" fill="#9cdcfe"/>
<rect x="27" y="63" width="1" height="1.400" fill="#179fff"/>
<rect x="16" y="65" width="1" height="1.400" fill="#179fff"/>
<rect x="16" y="67" width="4" height="1.400" fill="#c586c0"/>
<rect x="21" y="67" width="1" height="1.400" fill="#ffd700"/>
<rect x="22" y="67" width="3" height="1.400" fill="#ce9178"/>
<rect x="25" y="67" width="1" height="1.400" fill="#ffd700"/>
<rect x="26" y="67" width="1" height="1.400" fill="#d4d4d4"/>
<rect x="20" y="69" width="4" height="1.400" fill="#569cd6"/>
<rect x="24" y="69" width="2" height="1.400" fill="#d4d4d4"/>
<rect x="26" y="69" width="10" height="1.400" fill="#dcdcaa"/>
<rect x="36" y="69" width="2" height="1.400" fill="#ffd700"/>
<rect x="38" y="69" width="1" height="1.400" fill="#d4d4d4"/>
<rect x="20" y="71" width="5" height="1.400" fill="#c586c0"/>
<rect x="25" y="71" width="1" height="1.400" fill="#d4d4d4"/>
<rect x="16" y="73" width="4" height="1.400" fill="#c586c0"/>
<rect x="21" y="73" width="1" height="1.400" fill="#ffd700"/>
<rect x="22" y="73" width="3" height="1.400" fill="#ce9178"/>
<rect x="25" y="73" width="1" height="1.400" fill="#ffd700"/>
<rect x="26" y="73" width="1" height="1.400" fill="#d4d4d4"/>
<rect x="20" y="75" width="4" height="1.400" fill="#569cd6"/>
<rect x="24" y="75" width="2" height="1.400" fill="#d4d4d4"/>
<rect x="26" y="75" width="5" height="1.400" fill="#dcdcaa"/>
<rect x="31" y="75" width="2" height="1.400" fill="#ffd700"/>
<rect x="33" y="75" width="1" height="1.400" fill="#d4d4d4"/>
<rect x="20" y="77" width="5" height="1.400" fill="#c586c0"/>
<rect x="25" y="77" width="1" height="1.400" fill="#d4d4d4"/>
<rect x="16" y="79" width="4" height="1.400" fill="#c586c0"/>
<rect x="21" y="79" width="1" height="1.400" fill="#ffd700"/>
<rect x="22" y="79" width="3" height="1.400" fill="#ce9178"/>
<rect x="25" y="79" width="1" height="1.400" fill="#ffd700"/>
<rect x="26" y="79" width="1" height="1.400" fill="#d4d4d4"/>
<rect x="20" y="81" width="4" height="1.400" fill="#569cd6"/>
<rect x="24" y="81" width="2" height="1.400" fill="#d4d4d4"/>
<rect x="26" y="81" width="10" height="1.400" fill="#dcdcaa"/>
<rect x="36" y="81" width="2" height="1.400" fill="#ffd700"/>
<rect x="38" y="81" width="1" height="1.400" fill="#d4d4d4"/>
<rect x="20" y="83" width="5" height="1.400" fill="#c586c0"/>
<rect x="25" y="83" width="1" height="1.400" fill="#d4d4d4"/>
<rect x="16" y="85" width="4" height="1.400" fill="#c586c0"/>
<rect x="21" y="85" width="1" height="1.400" fill="#ffd700"/>
<rect x="22" y="85" width="3" height="1.400" fill="#ce9178"/>
<rect x="25" y="85" width="1" height="1.400" fill="#ffd700"/>
<rect x="26" y="85" width="1" height="1.400" fill="#d4d4d4"/>
<rect x="20" y="87" width="4" height="1.400" fill="#569cd6"/>
<rect x="24" y="87" width="2" height="1.400" fill="#d4d4d4"/>
<rect x="26" y="87" width="12" height="1.400" fill="#dcdcaa"/>
<rect x="38" y="87" width="2" height="1.400" fill="#ffd700"/>
<rect x="40" y="87" width="1" height="1.400" fill="#d4d4d4"/>
<rect x="20" y="89" width="5" height="1.400" fill="#c586c0"/>
<rect x="25" y="89" width="1" height="1.400" fill="#d4d4d4"/>
<rect x="16" y="91" width="7" height="1.400" fill="#c586c0"/>
<rect x="23" y="91" width="1" height="1.400" fill="#d4d4d4"/>
<rect x="20" y="93" width="4" height="1.400" fill="#9cdcfe"/>
<rect x="25" y="93" width="2" height="1.400" fill="#dcdcaa"/>
<rect x="28" y="93" width="12" height="1.400" fill="#ce9178"/>
<rect x="41" y="93" width="2" height="1.400" fill="#dcdcaa"/>
<rect x="44" y="93" width="4" height="1.400" fill="#dcdcaa"/>
<rect x="48" y="93" width="1" height="1.400" fill="#d4d4d4"/>
<rect x="20" y="95" width="5" height="1.400" fill="#c586c0"/>
<rect x="25" y="95" width="1" height="1.400" fill="#d4d4d4"/>
<rect x="16" y="97" width="1" height="1.400" fill="#179fff"/>
<rect x="12" y="99" width="1" height="1.400" fill="#da70d6"/>
<rect x="8" y="101" width="1" height="1.400" fill="#ffd700"/>
<rect x="8" y="105" width="4" height="1.400" fill="#569cd6"/>
<rect x="13" y="105" width="21" height="1.400" fill="#4ec9b0"/>
<rect x="34" y="105" width="2" height="1.400" fill="#d4d4d4"/>
<rect x="36" y="105" width="5" height="1.400" fill="#dcdcaa"/>
<rect x="41" y="105" width="2" height="1.400" fill="#ffd700"/>
<rect x="8" y="107" width="1" height="1.400" fill="#ffd700"/>
<rect x="12" y="109" width="5" height="1.400" fill="#c586c0"/>
<rect x="18" y="109" width="1" height="1.400" fill="#da70d6"/>
<rect x="19" y="109" width="4" height="1.400" fill="#569cd6"/>
<rect x="23" y="109" width="1" height="1.400" fill="#da70d6"/>
<rect x="12" y="111" width="1" height="1.400" fill="#da70d6"/>
<rect x="16" y="113" width="4" height="1.400" fill="#9cdcfe"/>
<rect x="21" y="113" width="2" height="1.400" fill="#dcdcaa"/>
<rect x="24" y="113" width="32" height="1.400" fill="#ce9178"/>
<rect x="57" y="113" width="2" height="1.400" fill="#dcdcaa"/>
<rect x="60" y="113" width="4" height="1.400" fill="#dcdcaa"/>
<rect x="64" y="113" width="1" height="1.400" fill="#d4d4d4"/>
<rect x="16" y="115" width="4" height="1.400" fill="#9cdcfe"/>
<rect x="21" y="115" width="2" height="1.400" fill="#dcdcaa"/>
<rect x="24" y="115" width="23" height="1.400" fill="#ce9178"/>
<rect x="48" y="115" width="2" height="1.400" fill="#dcdcaa"/>
<rect x="51" y="115" width="4" height="1.400" fill="#dcdcaa"/>
<rect x="55" y="115" width="1" height="1.400" fill="#d4d4d4"/>
<rect x="16" y="117" width="4" height="1.400" fill="#9cdcfe"/>
<rect x="21" y="117" width="2" height="1.400" fill="#dcdcaa"/>
<rect x="24" y="117" width="32" height="1.400" fill="#ce9178"/>
<rect x="57" y="117" width="2" height="1.400" fill="#dcdcaa"/>
<rect x="60" y="117" width="4" height="1.400" fill="#dcdcaa"/>
<rect x="64" y="117" width="1" height="1.400" fill="#d4d4d4"/>
<rect x="16" y="119" width="4" height="1.400" fill="#9cdcfe"/>
<rect x="21" y="119" width="2" height="1.400" fill="#dcdcaa"/>
<rect x="24" y="119" width="23" height="1.400" fill="#ce9178"/>
<rect x="48" y="119" width="2" height="1.400" fill="#dcdcaa"/>
<rect x="51" y="119" width="4" height="1.400" fill="#dcdcaa"/>
<rect x="55" y="119" width="1" height="1.400" fill="#d4d4d4"/>
<rect x="16" y="121" width="4" height="1.400" fill="#9cdcfe"/>
<rect x="21" y="121" width="2" height="1.400" fill="#dcdcaa"/>
<rect x="24" y="121" width="18" height="1.400" fill="#ce9178"/>
<rect x="43" y="121" width="2" height="1.400" fill="#dcdcaa"/>
<rect x="46" y="121" width="4" height="1.400" fill="#dcdcaa"/>
<rect x="50" y="121" width="1" height="1.400" fill="#d4d4d4"/>
<rect x="16" y="123" width="4" height="1.400" fill="#9cdcfe"/>
<rect x="21" y="123" width="2" height="1.400" fill="#dcdcaa"/>
<rect x="24" y="123" width="11" height="1.400" fill="#ce9178"/>
<rect x="36" y="123" width="2" height="1.400" fill="#dcdcaa"/>
<rect x="39" y="123" width="4" height="1.400" fill="#dcdcaa"/>
<rect x="43" y="123" width="1" height="1.400" fill="#d4d4d4"/>
<rect x="16" y="125" width="4" height="1.400" fill="#9cdcfe"/>
<rect x="21" y="125" width="2" height="1.400" fill="#dcdcaa"/>
<rect x="24" y="125" width="15" height="1.400" fill="#ce9178"/>
<rect x="40" y="125" width="2" height="1.400" fill="#dcdcaa"/>
<rect x="43" y="125" width="4" height="1.400" fill="#dcdcaa"/>
<rect x="47" y="125" width="1" height="1.400" fill="#d4d4d4"/>
<rect x="16" y="127" width="4" height="1.400" fill="#9cdcfe"/>
<rect x="21" y="127" width="2" height="1.400" fill="#dcdcaa"/>
<rect x="24" y="127" width="34" height="1.400" fill="#ce9178"/>
<rect x="16" y="129" width="4" height="1.400" fill="#569cd6"/>
<rect x="21" y="129" width="3" height="1.400" fill="#9cdcfe"/>
<rect x="25" y="129" width="1" height="1.400" fill="#d4d4d4"/>
<rect x="27" y="129" width="3" height="1.400" fill="#ce9178"/>
<rect x="30" y="129" width="1" height="1.400" fill="#d4d4d4"/>
<rect x="16" y="131" width="3" height="1.400" fill="#9cdcfe"/>
<rect x="20" y="131" width="2" height="1.400" fill="#dcdcaa"/>
<rect x="23" y="131" width="3" height="1.400" fill="#9cdcfe"/>
<rect x="26" y="131" width="1" height="1.400" fill="#d4d4d4"/>
<rect x="16" y="133" width="6" height="1.400" fill="#c586c0"/>
<rect x="23" y="133" width="1" height="1.400" fill="#179fff"/>
<rect x="24" y="133" width="3" height="1.400" fill="#9cdcfe"/>
<rect x="27" y="133" width="1" height="1.400" fill="#179fff"/>
<rect x="16" y="135" width="1" height="1.400" fill="#179fff"/>
<rect x="16" y="137" width="4" height="1.400" fill="#c586c0"/>
<rect x="21" y="137" width="1" height="1.400" fill="#ffd700"/>
<rect x="22" y="137" width="3" height="1.400" fill="#ce9178"/>
<rect x="25" y="137" width="1" height="1.400" fill="#ffd700"/>
<rect x="26" y="137" width="1" height="1.400" fill="#d4d4d4"/>
<rect x="20" y="139" width="4" height="1.400" fill="#569cd6"/>
<rect x="24" y="139" width="2" height="1.400" fill="#d4d4d4"/>
<rect x="26" y="139" width="8" height="1.400" fill="#dcdcaa"/>
<rect x="34" y="139" width="2" height="1.400" fill="#ffd700"/>
<rect x="36" y="139" width="1" height="1.400" fill="#d4d4d4"/>
<rect x="20" y="141" width="5" height="1.400" fill="#c586c0"/>
<rect x="25" y="141" width="1" height="1.400" fill="#d4d4d4"/>
<rect x="16" y="143" width="4" height="1.400" fill="#c586c0"/>
<rect x="21" y="143" width="1" height="1.400" fill="#ffd700"/>
<rect x="22" y="143" width="3" height="1.400" fill="#ce9178"/>
<rect x="25" y="143" width="1" height="1.400" fill="#ffd700"/>
<rect x="26" y="143" width="1" height="1.400" fill="#d4d4d4"/>
<rect x="20" y="145" width="4" height="1.400" fill="#569cd6"/>
<rect x="24" y="145" width="2" height="1.400" fill="#d4d4d4"/>
<rect x="26" y="145" width="6" height="1.400" fill="#dcdcaa"/>
<rect x="32" y="145" width="2" height="1.400" fill="#ffd700"/>
<rect x="34" y="145" width="1" height="1.400" fill="#d4d4d4"/>
<rect x="20" y="147" width="5" height="1.400" fill="#c586c0"/>
<rect x="25" y="147" width="1" height="1.400" fill="#d4d4d4"/>
<rect x="16" y="149" width="4" height="1.400" fill="#c586c0"/>
<rect x="21" y="149" width="1" height="1.400" fill="#ffd700"/>
<rect x="22" y="149" width="3" height="1.400" fill="#ce9178"/>
<rect x="25" y="149" width="1" height="1.400" fill="#ffd700"/>
<rect x="26" y="149" width="1" height="1.400" fill="#d4d4d4"/>
<rect x="20" y="151" width="4" height="1.400" fill="#569cd6"/>
<rect x="24" y="151" width="2" height="1.400" fill="#d4d4d4"/>
<rect x="26" y="151" width="8" height="1.400" fill="#dcdcaa"/>
<rect x="34" y="151" width="2" height="1.400" fill="#ffd700"/>
<rect x="36" y="151" width="1" height="1.400" fill="#d4d4d4"/>
<rect x="20" y="153" width="5" height="1.400" fill="#c586c0"/>
<rect x="25" y="153" width="1" height="1.400" fill="#d4d4d4"/>
<rect x="16" y="155" width="4" height="1.400" fill="#c586c0"/>
<rect x="21" y="155" width="1" height="1.400" fill="#ffd700"/>
<rect x="22" y="155" width="3" height="1.400" fill="#ce9178"/>
<rect x="25" y="155" width="1" height="1.400" fill="#ffd700"/>
<rect x="26" y="155" width="1" height="1.400" fill="#d4d4d4"/>
<rect x="20" y="157" width="4" height="1.400" fill="#569cd6"/>
<rect x="24" y="157" width="2" height="1.400" fill="#d4d4d4"/>
<rect x="26" y="157" width="4" height="1.400" fill="#dcdcaa"/>
<rect x="30" y="157" width="2" height="1.400" fill="#ffd700"/>
<rect x="32" y="157" width="1" height="1.400" fill="#d4d4d4"/>
<rect x="20" y="159" width="5" height="1.400" fill="#c586c0"/>
<rect x="25" y="159" width="1" height="1.400" fill="#d4d4d4"/>
<rect x="16" y="161" width="7" height="1.400" fill="#c586c0"/>
<rect x="23" y="161" width="1" height="1.400" fill="#d4d4d4"/>
<rect x="20" y="163" width="4" height="1.400" fill="#9cdcfe"/>
<rect x="25" y="163" width="2" height="1.400" fill="#dcdcaa"/>
<rect x="28" y="163" width="12" height="1.400" fill="#ce9178"/>
<rect x="41" y="163" width="2" height="1.400" fill="#dcdcaa"/>
<rect x="44" y="163" width="4" height="1.400" fill="#dcdcaa"/>
<rect x="48" y="163" width="1" height="1.400" fill="#d4d4d4"/>
<rect x="20" y="165" width="5" height="1.400" fill="#c586c0"/>
<rect x="25" y="165" width="1" height="1.400" fill="#d4d4d4"/>
<rect x="16" y="167" width="1" height="1.400" fill="#179fff"/>
<rect x="12" y="169" width="1" height="1.400" fill="#da70d6"/>
<rect x="8" y="171" width="1" height="1.400" fill="#ffd700"/>
<rect x="8" y="175" width="4" height="1.400" fill="#569cd6"/>
<rect x="13" y="175" width="21" height="1.400" fill="#4ec9b0"/>
<rect x="34" y="175" width="2" height="1.400" fill="#d4d4d4"/>
<rect x="36" y="175" width="5" height="1.400" fill="#dcdcaa"/>
<rect x="41" y="175" width="2" height="1.400" fill="#ffd700"/>
<rect x="8" y="177" width="1" height="1.400" fill="#ffd700"/>
<rect x="12" y="179" width="5" height="1.400" fill="#c586c0"/>
<rect x="18" y="179" width="1" height="1.400" fill="#da70d6"/>
<rect x="19" y="179" width="4" height="1.400" fill="#569cd6"/>
<rect x="23" y="179" width="1" height="1.400" fill="#da70d6"/>
<rect x="12" y="181" width="1" height="1.400" fill="#da70d6"/>
<rect x="16" y="183" width="4" height="1.400" fill="#9cdcfe"/>
<rect x="21" y="183" width="2" height="1.400" fill="#dcdcaa"/>
<rect x="24" y="183" width="32" height="1.400" fill="#ce9178"/>
<rect x="57" y="183" width="2" height="1.400" fill="#dcdcaa"/>
<rect x="60" y="183" width="4" height="1.400" fill="#dcdcaa"/>
<rect x="64" y="183" width="1" height="1.400" fill="#d4d4d4"/>
<rect x="16" y="185" width="4" height="1.400" fill="#9cdcfe"/>
<rect x="21" y="185" width="2" height="1.400" fill="#dcdcaa"/>
<rect x="24" y="185" width="31" height="1.400" fill="#ce9178"/>
<rect x="56" y="185" width="2" height="1.400" fill="#dcdcaa"/>
<rect x="59" y="185" width="4" height="1.400" fill="#dcdcaa"/>
<rect x="63" y="185" width="1" height="1.400" fill="#d4d4d4"/>
<rect x="16" y="187" width="4" height="1.400" fill="#9cdcfe"/>
<rect x="21" y="187" width="2" height="1.400" fill="#dcdcaa"/>
<rect x="24" y="187" width="32" height="1.400" fill="#ce9178"/>
<rect x="57" y="187" width="2" height="1.400" fill="#dcdcaa"/>
<rect x="60" y="187" width="4" height="1.400" fill="#dcdcaa"/>
<rect x="64" y="187" width="1" height="1.400" fill="#d4d4d4"/>
<rect x="16" y="189" width="4" height="1.400" fill="#9cdcfe"/>
<rect x="21" y="189" width="2" height="1.400" fill="#dcdcaa"/>
<rect x="24" y="189" width="10" height="1.400" fill="#ce9178"/>
<rect x="35" y="189" width="2" height="1.400" fill="#dcdcaa"/>
<rect x="38" y="189" width="4" height="1.400" fill="#dcdcaa"/>
<rect x="42" y="189" width="1" height="1.400" fill="#d4d4d4"/>
<rect x="16" y="191" width="4" height="1.400" fill="#9cdcfe"/>
<rect x="21" y="191" width="2" height="1.400" fill="#dcdcaa"/>
<rect x="24" y="191" width="24" height="1.400" fill="#ce9178"/>
<rect x="49" y="191" width="2" height="1.400" fill="#dcdcaa"/>
<rect x="52" y="191" width="4" height="1.400" fill="#dcdcaa"/>
<rect x="56" y="191" width="1" height="1.400" fill="#d4d4d4"/>
<rect x="16" y="193" width="4" height="1.400" fill="#9cdcfe"/>
<rect x="21" y="193" width="2" height="1.400" fill="#dcdcaa"/>
<rect x="24" y="193" width="18" height="1.400" fill="#ce9178"/>
<rect x="43" y="193" width="2" height="1.400" fill="#dcdcaa"/>
<rect x="46" y="193" width="4" height="1.400" fill="#dcdcaa"/>
<rect x="50" y="193" width="1" height="1.400" fill="#d4d4d4"/>
<rect x="16" y="195" width="4" height="1.400" fill="#9cdcfe"/>
<rect x="21" y="195" width="2" height="1.400" fill="#dcdcaa"/>
<rect x="24" y="195" width="13" height="1.400" fill="#ce9178"/>
<rect x="38" y="195" width="2" height="1.400" fill="#dcdcaa"/>
<rect x="41" y="195" width="4" height="1.400" fill="#dcdcaa"/>
<rect x="45" y="195" width="1" height="1.400" fill="#d4d4d4"/>
<rect x="16" y="197" width="4" height="1.400" fill="#9cdcfe"/>
<rect x="21" y="197" width="2" height="1.400" fill="#dcdcaa"/>
<rect x="24" y="197" width="10" height="1.400" fill="#ce9178"/>
<rect x="35" y="197" width="2" height="1.400" fill="#dcdcaa"/>
<rect x="38" y="197" width="4" height="1.400" fill="#dcdcaa"/>
<rect x="42" y="197" width="1" height="1.400" fill="#d4d4d4"/>
<rect x="16" y="199" width="4" height="1.400" fill="#9cdcfe"/>
<rect x="21" y="199" width="2" height="1.400" fill="#dcdcaa"/>
<rect x="24" y="199" width="11" height="1.400" fill="#ce9178"/>
<rect x="36" y="199" width="2" height="1.400" fill="#dcdcaa"/>
<rect x="39" y="199" width="4" height="1.400" fill="#dcdcaa"/>
<rect x="43" y="199" width="1" height="1.400" fill="#d4d4d4"/>
<rect x="16" y="201" width="4" height="1.400" fill="#9cdcfe"/>
<rect x="21" y="201" width="2" height="1.400" fill="#dcdcaa"/>
<rect x="24" y="201" width="34" height="1.400" fill="#ce9178"/>
<rect x="16" y="203" width="4" height="1.400" fill="#569cd6"/>
<rect x="21" y="203" width="3" height="1.400" fill="#9cdcfe"/>
<rect x="25" y="203" width="1" height="1.400" fill="#d4d4d4"/>
<rect x="27" y="203" width="3" height="1.400" fill="#ce9178"/>
<rect x="30" y="203" width="1" height="1.400" fill="#d4d4d4"/>
<rect x="16" y="205" width="3" height="1.400" fill="#9cdcfe"/>
<rect x="20" y="205" width="2" height="1.400" fill="#dcdcaa"/>
<rect x="23" y="205" width="3" height="1.400" fill="#9cdcfe"/>
<rect x="26" y="205" width="1" height="1.400" fill="#d4d4d4"/>
<rect x="16" y="207" width="6" height="1.400" fill="#c586c0"/>
<rect x="23" y="207" width="1" height="1.400" fill="#179fff"/>
<rect x="24" y="207" width="3" height="1.400" fill="#9cdcfe"/>
<rect x="27" y="207" width="1" height="1.400" fill="#179fff"/>
<rect x="16" y="209" width="1" height="1.400" fill="#179fff"/>
<rect x="16" y="211" width="4" height="1.400" fill="#c586c0"/>
<rect x="21" y="211" width="1" height="1.400" fill="#ffd700"/>
<rect x="22" y="211" width="3" height="1.400" fill="#ce9178"/>
<rect x="25" y="211" width="1" height="1.400" fill="#ffd700"/>
<rect x="26" y="211" width="1" height="1.400" fill="#d4d4d4"/>
<rect x="20" y="213" width="4" height="1.400" fill="#569cd6"/>
<rect x="24" y="213" width="2" height="1.400" fill="#d4d4d4"/>
<rect x="26" y="213" width="12" height="1.400" fill="#dcdcaa"/>
<rect x="38" y="213" width="2" height="1.400" fill="#ffd700"/>
<rect x="40" y="213" width="1" height="1.400" fill="#d4d4d4"/>
<rect x="20" y="215" width="5" height="1.400" fill="#c586c0"/>
<rect x="25" y="215" width="1" height="1.400" fill="#d4d4d4"/>
<rect x="16" y="217" width="4" height="1.400" fill="#c586c0"/>
<rect x="21" y="217" width="1" height="1.400" fill="#ffd700"/>
<rect x="22" y="217" width="3" height="1.400" fill="#ce9178"/>
<rect x="25" y="217" width="1" height="1.400" fill="#ffd700"/>
<rect x="26" y="217" width="1" height="1.400" fill="#d4d4d4"/>
<rect x="20" y="219" width="4" height="1.400" fill="#569cd6"/>
<rect x="24" y="219" width="2" height="1.400" fill="#d4d4d4"/>
<rect x="26" y="219" width="12" height="1.400" fill="#dcdcaa"/>
<rect x="38" y="219" width="2" height="1.400" fill="#ffd700"/>
<rect x="40" y="219" width="1" height="1.400" fill="#d4d4d4"/>
<rect x="20" y="221" width="5" height="1.400" fill="#c586c0"/>
<rect x="25" y="221" width="1" height="1.400" fill="#d4d4d4"/>
<rect x="16" y="223" width="4" height="1.400" fill="#c586c0"/>
<rect x="21" y="223" width="1" height="1.400" fill="#ffd700"/>
<rect x="22" y="223" width="3" height="1.400" fill="#ce9178"/>
<rect x="25" y="223" width="1" height="1.400" fill="#ffd700"/>
<rect x="26" y="223" width="1" height="1.400" fill="#d4d4d4"/>
<rect x="20" y="225" width="4" height="1.400" fill="#569cd6"/>
<rect x="24" y="225" width="2" height="1.400" fill="#d4d4d4"/>
<rect x="26" y="225" width="8" height="1.400" fill="#dcdcaa"/>
<rect x="34" y="225" width="2" height="1.400" fill="#ffd700"/>
<rect x="36" y="225" width="1" height="1.400" fill="#d4d4d4"/>
<rect x="20" y="227" width="5" height="1.400" fill="#c586c0"/>
<rect x="25" y="227" width="1" height="1.400" fill="#d4d4d4"/>
<rect x="16" y="229" width="4" height="1.400" fill="#c586c0"/>
<rect x="21" y="229" width="1" height="1.400" fill="#ffd700"/>
<rect x="22" y="229" width="3" height="1.400" fill="#ce9178"/>
<rect x="25" y="229" width="1" height="1.400" fill="#ffd700"/>
<rect x="26" y="229" width="1" height="1.400" fill="#d4d4d4"/>
<rect x="20" y="231" width="4" height="1.400" fill="#569cd6"/>
<rect x="24" y="231" width="2" height="1.400" fill="#d4d4d4"/>
<rect x="26" y="231" width="10" height="1.400" fill="#dcdcaa"/>
<rect x="36" y="231" width="2" height="1.400" fill="#ffd700"/>
<rect x="38" y="231" width="1" height="1.400" fill="#d4d4d4"/>
<rect x="20" y="233" width="5" height="1.400" fill="#c586c0"/>
<rect x="25" y="233" width="1" height="1.400" fill="#d4d4d4"/>
<rect x="16" y="235" width="4" height="1.400" fill="#c586c0"/>
<rect x="21" y="235" width="1" height="1.400" fill="#ffd700"/>
<rect x="22" y="235" width="3" height="1.400" fill="#ce9178"/>
<rect x="25" y="235" width="1" height="1.400" fill="#ffd700"/>
<rect x="26" y="235" width="1" height="1.400" fill="#d4d4d4"/>
<rect x="20" y="237" width="4" height="1.400" fill="#569cd6"/>
<rect x="24" y="237" width="2" height="1.400" fill="#d4d4d4"/>
<rect x="26" y="237" width="10" height="1.400" fill="#dcdcaa"/>
<rect x="36" y="237" width="2" height="1.400" fill="#ffd700"/>
<rect x="38" y="237" width="1" height="1.400" fill="#d4d4d4"/>
<rect x="20" y="239" width="5" height="1.400" fill="#c586c0"/>
<rect x="25" y="239" width="1" height="1.400" fill="#d4d4d4"/>
<rect x="16" y="241" width="7" height="1.400" fill="#c586c0"/>
<rect x="23" y="241" width="1" height="1.400" fill="#d4d4d4"/>
<rect x="20" y="243" width="4" height="1.400" fill="#9cdcfe"/>
<rect x="25" y="243" width="2" height="1.400" fill="#dcdcaa"/>
<rect x="28" y="243" width="12" height="1.400" fill="#ce9178"/>
<rect x="41" y="243" width="2" height="1.400" fill="#dcdcaa"/>
<rect x="44" y="243" width="4" height="1.400" fill="#dcdcaa"/>
<rect x="48" y="243" width="1" height="1.400" fill="#d4d4d4"/>
<rect x="20" y="245" width="5" height="1.400" fill="#c586c0"/>
<rect x="25" y="245" width="1" height="1.400" fill="#d4d4d4"/>
<rect x="16" y="247" width="1" height="1.400" fill="#179fff"/>
<rect x="12" y="249" width="1" height="1.400" fill="#da70d6"/>
<rect x="16" y="251" width="30" height="1.400" fill="#9cdcfe"/>
<rect x="46" y="251" width="1" height="1.400" fill="#d4d4d4"/>
<rect x="48" y="251" width="24" height="1.400" fill="#9cdcfe"/>
<rect x="16" y="253" width="4" height="1.400" fill="#dcdcaa"/>
<rect x="16" y="255" width="3" height="1.400" fill="#c586c0"/>
<rect x="8" y="257" width="1" height="1.400" fill="#ffd700"/>
<rect x="8" y="261" width="4" height="1.400" fill="#569cd6"/>
<rect x="13" y="261" width="21" height="1.400" fill="#4ec9b0"/>
<rect x="34" y="261" width="2" height="1.400" fill="#d4d4d4"/>
<rect x="36" y="261" width="7" height="1.400" fill="#dcdcaa"/>
<rect x="43" y="261" width="2" height="1.400" fill="#ffd700"/>
<rect x="8" y="263" width="1" height="1.400" fill="#ffd700"/>
<rect x="12" y="265" width="3" height="1.400" fill="#569cd6"/>
<rect x="16" y="265" width="7" height="1.400" fill="#9cdcfe"/>
<rect x="24" y="265" width="1" height="1.400" fill="#d4d4d4"/>
<rect x="26" y="265" width="12" height="1.400" fill="#569cd6"/>
<rect x="38" y="265" width="1" height="1.400" fill="#d4d4d4"/>
<rect x="12" y="267" width="6" height="1.400" fill="#4ec9b0"/>
<rect x="19" y="267" width="4" height="1.400" fill="#9cdcfe"/>
<rect x="23" y="267" width="1" height="1.400" fill="#d4d4d4"/>
<rect x="12" y="269" width="5" height="1.400" fill="#c586c0"/>
<rect x="18" y="269" width="1" height="1.400" fill="#da70d6"/>
<rect x="19" y="269" width="4" height="1.400" fill="#569cd6"/>
<rect x="23" y="269" width="1" height="1.400" fill="#da70d6"/>
<rect x="12" y="271" width="1" height="1.400" fill="#da70d6"/>
<rect x="16" y="273" width="4" height="1.400" fill="#9cdcfe"/>
<rect x="21" y="273" width="2" height="1.400" fill="#dcdcaa"/>
<rect x="24" y="273" width="32" height="1.400" fill="#ce9178"/>
<rect x="57" y="273" width="2" height="1.400" fill="#dcdcaa"/>
<rect x="60" y="273" width="4" height="1.400" fill="#dcdcaa"/>
<rect x="64" y="273" width="1" height="1.400" fill="#d4d4d4"/>
<rect x="16" y="275" width="4" height="1.400" fill="#9cdcfe"/>
<rect x="21" y="275" width="2" height="1.400" fill="#dcdcaa"/>
<rect x="24" y="275" width="28" height="1.400" fill="#ce9178"/>
<rect x="53" y="275" width="2" height="1.400" fill="#dcdcaa"/>
<rect x="56" y="275" width="4" height="1.400" fill="#dcdcaa"/>
<rect x="60" y="275" width="1" height="1.400" fill="#d4d4d4"/>
<rect x="16" y="277" width="4" height="1.400" fill="#9cdcfe"/>
<rect x="21" y="277" width="2" height="1.400" fill="#dcdcaa"/>
<rect x="24" y="277" width="32" height="1.400" fill="#ce9178"/>
<rect x="57" y="277" width="2" height="1.400" fill="#dcdcaa"/>
<rect x="60" y="277" width="4" height="1.400" fill="#dcdcaa"/>
<rect x="64" y="277" width="1" height="1.400" fill="#d4d4d4"/>
<rect x="16" y="279" width="4" height="1.400" fill="#9cdcfe"/>
<rect x="21" y="279" width="2" height="1.400" fill="#dcdcaa"/>
<rect x="24" y="279" width="16" height="1.400" fill="#ce9178"/>
<rect x="41" y="279" width="2" height="1.400" fill="#dcdcaa"/>
<rect x="44" y="279" width="4" height="1.400" fill="#dcdcaa"/>
<rect x="48" y="279" width="1" height="1.400" fill="#d4d4d4"/>
<rect x="16" y="281" width="4" height="1.400" fill="#9cdcfe"/>
<rect x="21" y="281" width="2" height="1.400" fill="#dcdcaa"/>
<rect x="24" y="281" width="11" height="1.400" fill="#ce9178"/>
<rect x="36" y="281" width="2" height="1.400" fill="#dcdcaa"/>
<rect x="39" y="281" width="4" height="1.400" fill="#dcdcaa"/>
<rect x="43" y="281" width="1" height="1.400" fill="#d4d4d4"/>
<rect x="16" y="283" width="4" height="1.400" fill="#9cdcfe"/>
<rect x="21" y="283" width="2" height="1.400" fill="#dcdcaa"/>
<rect x="24" y="283" width="13" height="1.400" fill="#ce9178"/>
<rect x="38" y="283" width="2" height="1.400" fill="#dcdcaa"/>
<rect x="41" y="283" width="4" height="1.400" fill="#dcdcaa"/>
<rect x="45" y="283" width="1" height="1.400" fill="#d4d4d4"/>
<rect x="16" y="285" width="4" height="1.400" fill="#9cdcfe"/>
<rect x="21" y="285" width="2" height="1.400" fill="#dcdcaa"/>
<rect x="24" y="285" width="11" height="1.400" fill="#ce9178"/>
<rect x="36" y="285" width="2" height="1.400" fill="#dcdcaa"/>
<rect x="39" y="285" width="4" height="1.400" fill="#dcdcaa"/>
<rect x="43" y="285" width="1" height="1.400" fill="#d4d4d4"/>
<rect x="16" y="287" width="4" height="1.400" fill="#9cdcfe"/>
<rect x="21" y="287" width="2" height="1.400" fill="#dcdcaa"/>
<rect x="24" y="287" width="18" height="1.400" fill="#ce9178"/>
<rect x="43" y="287" width="2" height="1.400" fill="#dcdcaa"/>
<rect x="46" y="287" width="4" height="1.400" fill="#dcdcaa"/>
<rect x="50" y="287" width="1" height="1.400" fill="#d4d4d4"/>
<rect x="16" y="289" width="4" height="1.400" fill="#9cdcfe"/>
<rect x="21" y="289" width="2" height="1.400" fill="#dcdcaa"/>
<rect x="24" y="289" width="34" height="1.400" fill="#ce9178"/>
<rect x="16" y="291" width="4" height="1.400" fill="#569cd6"/>
<rect x="21" y="291" width="3" height="1.400" fill="#9cdcfe"/>
<rect x="25" y="291" width="1" height="1.400" fill="#d4d4d4"/>
<rect x="27" y="291" width="3" height="1.400" fill="#ce9178"/>
<rect x="30" y="291" width="1" height="1.400" fill="#d4d4d4"/>
<rect x="16" y="293" width="3" height="1.400" fill="#9cdcfe"/>
<rect x="20" y="293" width="2" height="1.400" fill="#dcdcaa"/>
<rect x="23" y="293" width="3" height="1.400" fill="#9cdcfe"/>
<rect x="26" y="293" width="1" height="1.400" fill="#d4d4d4"/>
<rect x="16" y="295" width="6" height="1.400" fill="#c586c0"/>
<rect x="23" y="295" width="1" height="1.400" fill="#179fff"/>
<rect x="24" y="295" width="3" height="1.400" fill="#9cdcfe"/>
<rect x="27" y="295" width="1" height="1.400" fill="#179fff"/>
<rect x="16" y="297" width="1" height="1.400" fill="#179fff"/>
<rect x="16" y="299" width="7" height="1.400" fill="#c586c0"/>
<rect x="23" y="299" width="1" height="1.400" fill="#d4d4d4"/>
<rect x="20" y="301" width="4" height="1.400" fill="#9cdcfe"/>
<rect x="25" y="301" width="2" height="1.400" fill="#dcdcaa"/>
<rect x="28" y="301" width="12" height="1.400" fill="#ce9178"/>
<rect x="41" y="301" width="2" height="1.400" fill="#dcdcaa"/>
<rect x="44" y="301" width="4" height="1.400" fill="#dcdcaa"/>
<rect x="48" y="301" width="1" height="1.400" fill="#d4d4d4"/>
<rect x="20" y="303" width="5" height="1.400" fill="#c586c0"/>
<rect x="25" y="303" width="1" height="1.400" fill="#d4d4d4"/>
<rect x="16" y="305" width="4" height="1.400" fill="#c586c0"/>
<rect x="21" y="305" width="1" height="1.400" fill="#ffd700"/>
<rect x="22" y="305" width="3" height="1.400" fill="#ce9178"/>
<rect x="25" y="305" width="1" height="1.400" fill="#ffd700"/>
<rect x="26" y="305" width="1" height="1.400" fill="#d4d4d4"/>
<rect x="16" y="307" width="1" height="1.400" fill="#ffd700"/>
<rect x="20" y="309" width="2" height="1.400" fill="#c586c0"/>
<rect x="23" y="309" width="1" height="1.400" fill="#da70d6"/>
<rect x="24" y="309" width="1" height="1.400" fill="#d4d4d4"/>
<rect x="25" y="309" width="4" height="1.400" fill="#569cd6"/>
<rect x="29" y="309" width="2" height="1.400" fill="#d4d4d4"/>
<rect x="31" y="309" width="7" height="1.400" fill="#dcdcaa"/>
<rect x="38" y="309" width="2" height="1.400" fill="#179fff"/>
<rect x="40" y="309" width="1" height="1.400" fill="#da70d6"/>
<rect x="20" y="311" width="1" height="1.400" fill="#da70d6"/>
<rect x="24" y="313" width="4" height="1.400" fill="#9cdcfe"/>
<rect x="29" y="313" width="2" height="1.400" fill="#dcdcaa"/>
<rect x="32" y="313" width="22" height="1.400" fill="#ce9178"/>
<rect x="55" y="313" width="2" height="1.400" fill="#dcdcaa"/>
<rect x="58" y="313" width="4" height="1.400" fill="#dcdcaa"/>
<rect x="62" y="313" width="1" height="1.400" fill="#d4d4d4"/>
<rect x="24" y="315" width="4" height="1.400" fill="#9cdcfe"/>
<rect x="29" y="315" width="2" height="1.400" fill="#dcdcaa"/>
<rect x="32" y="315" width="16" height="1.400" fill="#ce9178"/>
<rect x="49" y="315" width="2" height="1.400" fill="#dcdcaa"/>
<rect x="52" y="315" width="4" height="1.400" fill="#dcdcaa"/>
<rect x="56" y="315" width="1" height="1.400" fill="#d4d4d4"/>
<rect x="24" y="317" width="5" height="1.400" fill="#c586c0"/>
<rect x="29" y="317" width="1" height="1.400" fill="#d4d4d4"/>
<rect x="20" y="319" width="1" height="1.400" fill="#da70d6"/>
<rect x="20" y="321" width="6" height="1.400" fill="#4ec9b0"/>
<rect x="27" y="321" width="4" height="1.400" fill="#9cdcfe"/>
<rect x="31" y="321" width="1" height="1.400" fill="#d4d4d4"/>
<rect x="33" y="321" width="7" height="1.400" fill="#9cdcfe"/>
<rect x="40" y="321" width="1" height="1.400" fill="#d4d4d4"/>
<rect x="20" y="323" width="4" height="1.400" fill="#9cdcfe"/>
<rect x="25" y="323" width="2" height="1.400" fill="#dcdcaa"/>
<rect x="28" y="323" width="15" height="1.400" fill="#ce9178"/>
<rect x="20" y="325" width="3" height="1.400" fill="#9cdcfe"/>
<rect x="24" y="325" width="2" height="1.400" fill="#dcdcaa"/>
<rect x="27" y="325" width="5" height="1.400" fill="#9cdcfe"/>
<rect x="32" y="325" width="1" height="1.400" fill="#d4d4d4"/>
<rect x="20" y="327" width="4" height="1.400" fill="#9cdcfe"/>
<rect x="25" y="327" width="2" height="1.400" fill="#dcdcaa"/>
<rect x="28" y="327" width="22" height="1.400" fill="#ce9178"/>
<rect x="20" y="329" width="3" height="1.400" fill="#9cdcfe"/>
<rect x="24" y="329" width="2" height="1.400" fill="#dcdcaa"/>
<rect x="27" y="329" width="5" height="1.400" fill="#9cdcfe"/>
<rect x="32" y="329" width="1" height="1.400" fill="#d4d4d4"/>
<rect x="20" y="331" width="4" height="1.400" fill="#9cdcfe"/>
<rect x="25" y="331" width="2" height="1.400" fill="#dcdcaa"/>
<rect x="28" y="331" width="22" height="1.400" fill="#ce9178"/>
<rect x="20" y="333" width="3" height="1.400" fill="#9cdcfe"/>
<rect x="24" y="333" width="2" height="1.400" fill="#dcdcaa"/>
<rect x="27" y="333" width="5" height="1.400" fill="#9cdcfe"/>
<rect x="32" y="333" width="1" height="1.400" fill="#d4d4d4"/>
<rect x="20" y="335" width="4" height="1.400" fill="#569cd6"/>
<rect x="24" y="335" width="2" height="1.400" fill="#d4d4d4"/>
<rect x="26" y="335" width="11" height="1.400" fill="#9cdcfe"/>
<rect x="37" y="335" width="1" height="1.400" fill="#d4d4d4"/>
<rect x="38" y="335" width="6" height="1.400" fill="#dcdcaa"/>
<rect x="44" y="335" width="1" height="1.400" fill="#da70d6"/>
<rect x="45" y="335" width="4" height="1.400" fill="#9cdcfe"/>
<rect x="49" y="335" width="1" height="1.400" fill="#d4d4d4"/>
<rect x="51" y="335" width="7" height="1.400" fill="#9cdcfe"/>
<rect x="58" y="335" width="1" height="1.400" fill="#d4d4d4"/>
<rect x="60" y="335" width="5" height="1.400" fill="#9cdcfe"/>
<rect x="65" y="335" width="1" height="1.400" fill="#da70d6"/>
<rect x="66" y="335" width="1" height="1.400" fill="#d4d4d4"/>
<rect x="20" y="337" width="5" height="1.400" fill="#c586c0"/>
<rect x="25" y="337" width="1" height="1.400" fill="#d4d4d4"/>
<rect x="16" y="339" width="1" height="1.400" fill="#ffd700"/>
<rect x="16" y="341" width="4" height="1.400" fill="#c586c0"/>
<rect x="21" y="341" width="1" height="1.400" fill="#ffd700"/>
<rect x="22" y="341" width="3" height="1.400" fill="#ce9178"/>
<rect x="25" y="341" width="1" height="1.400" fill="#ffd700"/>
<rect x="26" y="341" width="1" height="1.400" fill="#d4d4d4"/>
<rect x="16" y="343" width="1" height="1.400" fill="#ffd700"/>
<rect x="20" y="345" width="2" height="1.400" fill="#c586c0"/>
<rect x="23" y="345" width="1" height="1.400" fill="#da70d6"/>
<rect x="24" y="345" width="1" height="1.400" fill="#d4d4d4"/>
<rect x="25" y="345" width="4" height="1.400" fill="#569cd6"/>
<rect x="29" y="345" width="2" height="1.400" fill="#d4d4d4"/>
<rect x="31" y="345" width="7" height="1.400" fill="#dcdcaa"/>
<rect x="38" y="345" width="2" height="1.400" fill="#179fff"/>
<rect x="40" y="345" width="1" height="1.400" fill="#da70d6"/>
<rect x="20" y="347" width="1" height="1.400" fill="#da70d6"/>
<rect x="24" y="349" width="4" height="1.400" fill="#9cdcfe"/>
<rect x="29" y="349" width="2" height="1.400" fill="#dcdcaa"/>
<rect x="32" y="349" width="25" height="1.400" fill="#ce9178"/>
<rect x="58" y="349" width="2" height="1.400" fill="#dcdcaa"/>
<rect x="61" y="349" width="4" height="1.400" fill="#dcdcaa"/>
<rect x="65" y="349" width="1" height="1.400" fill="#d4d4d4"/>
<rect x="24" y="351" width="4" height="1.400" fill="#9cdcfe"/>
<rect x="29" y="351" width="2" height="1.400" fill="#dcdcaa"/>
<rect x="32" y="351" width="16" height="1.400" fill="#ce9178"/>
<rect x="49" y="351" width="2" height="1.400" fill="#dcdcaa"/>
<rect x="52" y="351" width="4" height="1.400" fill="#dcdcaa"/>
<rect x="56" y="351" width="1" height="1.400" fill="#d4d4d4"/>
<rect x="24" y="353" width="5" height="1.400" fill="#c586c0"/>
<rect x="29" y="353" width="1" height="1.400" fill="#d4d4d4"/>
<rect x="20" y="355" width="1" height="1.400" fill="#da70d6"/>
<rect x="20" y="357" width="6" height="1.400" fill="#4ec9b0"/>
<rect x="27" y="357" width="4" height="1.400" fill="#9cdcfe"/>
<rect x="31" y="357" width="1" height="1.400" fill="#d4d4d4"/>
<rect x="33" y="357" width="7" height="1.400" fill="#9cdcfe"/>
<rect x="40" y="357" width="1" height="1.400" fill="#d4d4d4"/>
<rect x="20" y="359" width="4" height="1.400" fill="#9cdcfe"/>
<rect x="25" y="359" width="2" height="1.400" fill="#dcdcaa"/>
<rect x="28" y="359" width="12" height="1.400" fill="#ce9178"/>
<rect x="20" y="361" width="3" height="1.400" fill="#9cdcfe"/>
<rect x="24" y="361" width="2" height="1.400" fill="#dcdcaa"/>
<rect x="27" y="361" width="5" height="1.400" fill="#9cdcfe"/>
<rect x="32" y="361" width="1" height="1.400" fill="#d4d4d4"/>
<rect x="20" y="363" width="4" height="1.400" fill="#9cdcfe"/>
<rect x="25" y="363" width="2" height="1.400" fill="#dcdcaa"/>
<rect x="28" y="363" width="15" height="1.400" fill="#ce9178"/>
<rect x="20" y="365" width="3" height="1.400" fill="#9cdcfe"/>
<rect x="24" y="365" width="2" height="1.400" fill="#dcdcaa"/>
<rect x="27" y="365" width="5" height="1.400" fill="#9cdcfe"/>
<rect x="32" y="365" width="1" height="1.400" fill="#d4d4d4"/>
<rect x="20" y="367" width="4" height="1.400" fill="#9cdcfe"/>
<rect x="25" y="367" width="2" height="1.400" fill="#dcdcaa"/>
<rect x="28" y="367" width="12" height="1.400" fill="#ce9178"/>
<rect x="20" y="369" width="3" height="1.400" fill="#9cdcfe"/>
<rect x="24" y="369" width="2" height="1.400" fill="#dcdcaa"/>
<rect x="27" y="369" width="5" height="1.400" fill="#9cdcfe"/>
<rect x="32" y="369" width="1" height="1.400" fill="#d4d4d4"/>
<rect x="20" y="371" width="4" height="1.400" fill="#9cdcfe"/>
<rect x="25" y="371" width="2" height="1.400" fill="#dcdcaa"/>
<rect x="28" y="371" width="20" height="1.400" fill="#ce9178"/>
<rect x="20" y="373" width="3" height="1.400" fill="#9cdcfe"/>
<rect x="24" y="373" width="2" height="1.400" fill="#dcdcaa"/>
<rect x="27" y="373" width="5" height="1.400" fill="#9cdcfe"/>
<rect x="32" y="373" width="1" height="1.400" fill="#d4d4d4"/>
<rect x="20" y="375" width="4" height="1.400" fill="#9cdcfe"/>
<rect x="25" y="375" width="2" height="1.400" fill="#dcdcaa"/>
<rect x="28" y="375" width="14" height="1.400" fill="#ce9178"/>
<rect x="20" y="377" width="3" height="1.400" fill="#9cdcfe"/>
<rect x="24" y="377" width="2" height="1.400" fill="#dcdcaa"/>
<rect x="27" y="377" width="5" height="1.400" fill="#9cdcfe"/>
<rect x="32" y="377" width="1" height="1.400" fill="#d4d4d4"/>
<rect x="20" y="379" width="4" height="1.400" fill="#9cdcfe"/>
<rect x="25" y="379" width="2" height="1.400" fill="#dcdcaa"/>
<rect x="28" y="379" width="16" height="1.400" fill="#ce9178"/>
<rect x="20" y="381" width="3" height="1.400" fill="#9cdcfe"/>
<rect x="24" y="381" width="2" height="1.400" fill="#dcdcaa"/>
<rect x="27" y="381" width="5" height="1.400" fill="#9cdcfe"/>
<rect x="32" y="381" width="1" height="1.400" fill="#d4d4d4"/>
<rect x="20" y="383" width="4" height="1.400" fill="#569cd6"/>
<rect x="24" y="383" width="2" height="1.400" fill="#d4d4d4"/>
<rect x="26" y="383" width="11" height="1.400" fill="#9cdcfe"/>
<rect x="37" y="383" width="1" height="1.400" fill="#d4d4d4"/>
<rect x="38" y="383" width="6" height="1.400" fill="#dcdcaa"/>
<rect x="44" y="383" width="1" height="1.400" fill="#da70d6"/>
<rect x="45" y="383" width="4" height="1.400" fill="#9cdcfe"/>
<rect x="49" y="383" width="1" height="1.400" fill="#d4d4d4"/>
<rect x="51" y="383" width="7" height="1.400" fill="#9cdcfe"/>
<rect x="58" y="383" width="1" height="1.400" fill="#d4d4d4"/>
<rect x="60" y="383" width="5" height="1.400" fill="#9cdcfe"/>
<rect x="65" y="383" width="1" height="1.400" fill="#da70d6"/>
<rect x="66" y="383" width="1" height="1.400" fill="#d4d4d4"/>
<rect x="20" y="385" width="5" height="1.400" fill="#c586c0"/>
<rect x="25" y="385" width="1" height="1.400" fill="#d4d4d4"/>
<rect x="16" y="387" width="1" height="1.400" fill="#ffd700"/>
<rect x="16" y="389" width="4" height="1.400" fill="#c586c0"/>
<rect x="21" y="389" width="1" height="1.400" fill="#ffd700"/>
<rect x="22" y="389" width="3" height="1.400" fill="#ce9178"/>
<rect x="25" y="389" width="1" height="1.400" fill="#ffd700"/>
<rect x="26" y="389" width="1" height="1.400" fill="#d4d4d4"/>
<rect x="16" y="391" width="1" height="1.400" fill="#ffd700"/>
<rect x="20" y="393" width="2" height="1.400" fill="#c586c0"/>
<rect x="23" y="393" width="1" height="1.400" fill="#da70d6"/>
<rect x="24" y="393" width="1" height="1.400" fill="#d4d4d4"/>
<rect x="25" y="393" width="4" height="1.400" fill="#569cd6"/>
<rect x="29" y="393" width="2" height="1.400" fill="#d4d4d4"/>
<rect x="31" y="393" width="7" height="1.400" fill="#dcdcaa"/>
<rect x="38" y="393" width="2" height="1.400" fill="#179fff"/>
<rect x="40" y="393" width="1" height="1.400" fill="#da70d6"/>
<rect x="20" y="395" width="1" height="1.400" fill="#da70d6"/>
<rect x="24" y="397" width="4" height="1.400" fill="#9cdcfe"/>
<rect x="29" y="397" width="2" height="1.400" fill="#dcdcaa"/>
<rect x="32" y="397" width="22" height="1.400" fill="#ce9178"/>
<rect x="55" y="397" width="2" height="1.400" fill="#dcdcaa"/>
<rect x="58" y="397" width="4" height="1.400" fill="#dcdcaa"/>
<rect x="62" y="397" width="1" height="1.400" fill="#d4d4d4"/>
<rect x="24" y="399" width="4" height="1.400" fill="#9cdcfe"/>
<rect x="29" y="399" width="2" height="1.400" fill="#dcdcaa"/>
<rect x="32" y="399" width="18" height="1.400" fill="#ce9178"/>
<rect x="51" y="399" width="2" height="1.400" fill="#dcdcaa"/>
<rect x="54" y="399" width="4" height="1.400" fill="#dcdcaa"/>
<rect x="58" y="399" width="1" height="1.400" fill="#d4d4d4"/>
<rect x="24" y="401" width="5" height="1.400" fill="#c586c0"/>
<rect x="29" y="401" width="1" height="1.400" fill="#d4d4d4"/>
<rect x="20" y="403" width="1" height="1.400" fill="#da70d6"/>
<rect x="20" y="405" width="6" height="1.400" fill="#4ec9b0"/>
<rect x="27" y="405" width="4" height="1.400" fill="#9cdcfe"/>
<rect x="31" y="405" width="1" height="1.400" fill="#d4d4d4"/>
<rect x="33" y="405" width="7" height="1.400" fill="#9cdcfe"/>
<rect x="40" y="405" width="1" height="1.400" fill="#d4d4d4"/>
<rect x="20" y="407" width="4" height="1.400" fill="#9cdcfe"/>
<rect x="25" y="407" width="2" height="1.400" fill="#dcdcaa"/>
<rect x="28" y="407" width="21" height="1.400" fill="#ce9178"/>
<rect x="20" y="409" width="3" height="1.400" fill="#9cdcfe"/>
<rect x="24" y="409" width="2" height="1.400" fill="#dcdcaa"/>
<rect x="27" y="409" width="5" height="1.400" fill="#9cdcfe"/>
<rect x="32" y="409" width="1" height="1.400" fill="#d4d4d4"/>
<rect x="20" y="411" width="4" height="1.400" fill="#9cdcfe"/>
<rect x="25" y="411" width="2" height="1.400" fill="#dcdcaa"/>
<rect x="28" y="411" width="16" height="1.400" fill="#ce9178"/>
<rect x="20" y="413" width="3" height="1.400" fill="#9cdcfe"/>
<rect x="24" y="413" width="2" height="1.400" fill="#dcdcaa"/>
<rect x="27" y="413" width="5" height="1.400" fill="#9cdcfe"/>
<rect x="32" y="413" width="1" height="1.400" fill="#d4d4d4"/>
<rect x="20" y="415" width="4" height="1.400" fill="#9cdcfe"/>
<rect x="25" y="415" width="2" height="1.400" fill="#dcdcaa"/>
<rect x="28" y="415" width="20" height="1.400" fill="#ce9178"/>
<rect x="20" y="417" width="3" height="1.400" fill="#9cdcfe"/>
<rect x="24" y="417" width="2" height="1.400" fill="#dcdcaa"/>
<rect x="27" y="417" width="5" height="1.400" fill="#9cdcfe"/>
<rect x="32" y="417" width="1" height="1.400" fill="#d4d4d4"/>
<rect x="20" y="419" width="4" height="1.400" fill="#569cd6"/>
<rect x="24" y="419" width="2" height="1.400" fill="#d4d4d4"/>
<rect x="26" y="419" width="11" height="1.400" fill="#9cdcfe"/>
<rect x="37" y="419" width="1" height="1.400" fill="#d4d4d4"/>
<rect x="38" y="419" width="6" height="1.400" fill="#dcdcaa"/>
<rect x="44" y="419" width="1" height="1.400" fill="#da70d6"/>
<rect x="45" y="419" width="4" height="1.400" fill="#9cdcfe"/>
<rect x="49" y="419" width="1" height="1.400" fill="#d4d4d4"/>
<rect x="51" y="419" width="7" height="1.400" fill="#9cdcfe"/>
<rect x="58" y="419" width="1" height="1.400" fill="#d4d4d4"/>
<rect x="60" y="419" width="5" height="1.400" fill="#9cdcfe"/>
<rect x="65" y="419" width="1" height="1.400" fill="#da70d6"/>
<rect x="66" y="419" width="1" height="1.400" fill="#d4d4d4"/>
<rect x="20" y="421" width="5" height="1.400" fill="#c586c0"/>
<rect x="25" y="421" width="1" height="1.400" fill="#d4d4d4"/>
<rect x="16" y="423" width="1" height="1.400" fill="#ffd700"/>
<rect x="16" y="425" width="1" height="1.400" fill="#179fff"/>
<rect x="12" y="427" width="1" height="1.400" fill="#da70d6"/>
<rect x="8" y="429" width="1" height="1.400" fill="#ffd700"/>
<rect x="8" y="433" width="4" height="1.400" fill="#569cd6"/>
<rect x="13" y="433" width="21" height="1.400" fill="#4ec9b0"/>
<rect x="34" y="433" width="2" height="1.400" fill="#d4d4d4"/>
<rect x="36" y="433" width="7" height="1.400" fill="#dcdcaa"/>
<rect x="43" y="433" width="2" height="1.400" fill="#ffd700"/>
<rect x="8" y="435" width="1" height="1.400" fill="#ffd700"/>
<rect x="12" y="437" width="5" height="1.400" fill="#c586c0"/>
<rect x="18" y="437" width="1" height="1.400" fill="#da70d6"/>
<rect x="19" y="437" width="4" height="1.400" fill="#569cd6"/>
<rect x="23" y="437" width="1" height="1.400" fill="#da70d6"/>
<rect x="12" y="439" width="1" height="1.400" fill="#da70d6"/>
<rect x="16" y="441" width="4" height="1.400" fill="#9cdcfe"/>
<rect x="21" y="441" width="2" height="1.400" fill="#dcdcaa"/>
<rect x="24" y="441" width="32" height="1.400" fill="#ce9178"/>
<rect x="57" y="441" width="2" height="1.400" fill="#dcdcaa"/>
<rect x="60" y="441" width="4" height="1.400" fill="#dcdcaa"/>
<rect x="64" y="441" width="1" height="1.400" fill="#d4d4d4"/>
<rect x="16" y="443" width="4" height="1.400" fill="#9cdcfe"/>
<rect x="21" y="443" width="2" height="1.400" fill="#dcdcaa"/>
<rect x="24" y="443" width="23" height="1.400" fill="#ce9178"/>
<rect x="48" y="443" width="2" height="1.400" fill="#dcdcaa"/>
<rect x="51" y="443" width="4" height="1.400" fill="#dcdcaa"/>
<rect x="55" y="443" width="1" height="1.400" fill="#d4d4d4"/>
<rect x="16" y="445" width="4" height="1.400" fill="#9cdcfe"/>
<rect x="21" y="445" width="2" height="1.400" fill="#dcdcaa"/>
<rect x="24" y="445" width="32" height="1.400" fill="#ce9178"/>
<rect x="57" y="445" width="2" height="1.400" fill="#dcdcaa"/>
<rect x="60" y="445" width="4" height="1.400" fill="#dcdcaa"/>
<rect x="64" y="445" width="1" height="1.400" fill="#d4d4d4"/>
<rect x="16" y="447" width="4" height="1.400" fill="#9cdcfe"/>
<rect x="21" y="447" width="2" height="1.400" fill="#dcdcaa"/>
<rect x="24" y="447" width="18" height="1.400" fill="#ce9178"/>
<rect x="43" y="447" width="2" height="1.400" fill="#dcdcaa"/>
<rect x="46" y="447" width="4" height="1.400" fill="#dcdcaa"/>
<rect x="50" y="447" width="1" height="1.400" fill="#d4d4d4"/>
<rect x="16" y="449" width="4" height="1.400" fill="#9cdcfe"/>
<rect x="21" y="449" width="2" height="1.400" fill="#dcdcaa"/>
<rect x="24" y="449" width="21" height="1.400" fill="#ce9178"/>
<rect x="46" y="449" width="2" height="1.400" fill="#dcdcaa"/>
<rect x="49" y="449" width="4" height="1.400" fill="#dcdcaa"/>
<rect x="53" y="449" width="1" height="1.400" fill="#d4d4d4"/>
<rect x="16" y="451" width="4" height="1.400" fill="#9cdcfe"/>
<rect x="21" y="451" width="2" height="1.400" fill="#dcdcaa"/>
<rect x="24" y="451" width="11" height="1.400" fill="#ce9178"/>
<rect x="36" y="451" width="2" height="1.400" fill="#dcdcaa"/>
<rect x="39" y="451" width="4" height="1.400" fill="#dcdcaa"/>
<rect x="43" y="451" width="1" height="1.400" fill="#d4d4d4"/>
<rect x="16" y="453" width="4" height="1.400" fill="#9cdcfe"/>
<rect x="21" y="453" width="2" height="1.400" fill="#dcdcaa"/>
<rect x="24" y="453" width="19" height="1.400" fill="#ce9178"/>
<rect x="44" y="453" width="2" height="1.400" fill="#dcdcaa"/>
<rect x="47" y="453" width="4" height="1.400" fill="#dcdcaa"/>
<rect x="51" y="453" width="1" height="1.400" fill="#d4d4d4"/>
<rect x="16" y="455" width="4" height="1.400" fill="#9cdcfe"/>
<rect x="21" y="455" width="2" height="1.400" fill="#dcdcaa"/>
<rect x="24" y="455" width="34" height="1.400" fill="#ce9178"/>
<rect x="16" y="457" width="4" height="1.400" fill="#569cd6"/>
<rect x="21" y="457" width="3" height="1.400" fill="#9cdcfe"/>
<rect x="25" y="457" width="1" height="1.400" fill="#d4d4d4"/>
<rect x="27" y="457" width="3" height="1.400" fill="#ce9178"/>
<rect x="30" y="457" width="1" height="1.400" fill="#d4d4d4"/>
<rect x="16" y="459" width="3" height="1.400" fill="#9cdcfe"/>
<rect x="20" y="459" width="2" height="1.400" fill="#dcdcaa"/>
<rect x="23" y="459" width="3" height="1.400" fill="#9cdcfe"/>
<rect x="26" y="459" width="1" height="1.400" fill="#d4d4d4"/>
<rect x="16" y="461" width="6" height="1.400" fill="#c586c0"/>
<rect x="23" y="461" width="1" height="1.400" fill="#179fff"/>
<rect x="24" y="461" width="3" height="1.400" fill="#9cdcfe"/>
<rect x="27" y="461" width="1" height="1.400" fill="#179fff"/>
<rect x="16" y="463" width="1" height="1.400" fill="#179fff"/>
<rect x="16" y="465" width="4" height="1.400" fill="#c586c0"/>
<rect x="21" y="465" width="1" height="1.400" fill="#ffd700"/>
<rect x="22" y="465" width="3" height="1.400" fill="#ce9178"/>
<rect x="25" y="465" width="1" height="1.400" fill="#ffd700"/>
<rect x="26" y="465" width="1" height="1.400" fill="#d4d4d4"/>
<rect x="20" y="467" width="4" height="1.400" fill="#569cd6"/>
<rect x="24" y="467" width="2" height="1.400" fill="#d4d4d4"/>
<rect x="26" y="467" width="9" height="1.400" fill="#dcdcaa"/>
<rect x="35" y="467" width="2" height="1.400" fill="#ffd700"/>
<rect x="37" y="467" width="1" height="1.400" fill="#d4d4d4"/>
<rect x="20" y="469" width="5" height="1.400" fill="#c586c0"/>
<rect x="25" y="469" width="1" height="1.400" fill="#d4d4d4"/>
<rect x="16" y="471" width="4" height="1.400" fill="#c586c0"/>
<rect x="21" y="471" width="1" height="1.400" fill="#ffd700"/>
<rect x="22" y="471" width="3" height="1.400" fill="#ce9178"/>
<rect x="25" y="471" width="1" height="1.400" fill="#ffd700"/>
<rect x="26" y="471" width="1" height="1.400" fill="#d4d4d4"/>
<rect x="20" y="473" width="4" height="1.400" fill="#569cd6"/>
<rect x="24" y="473" width="2" height="1.400" fill="#d4d4d4"/>
<rect x="26" y="473" width="11" height="1.400" fill="#dcdcaa"/>
<rect x="37" y="473" width="2" height="1.400" fill="#ffd700"/>
<rect x="39" y="473" width="1" height="1.400" fill="#d4d4d4"/>
<rect x="20" y="475" width="5" height="1.400" fill="#c586c0"/>
<rect x="25" y="475" width="1" height="1.400" fill="#d4d4d4"/>
<rect x="16" y="477" width="7" height="1.400" fill="#c586c0"/>
<rect x="23" y="477" width="1" height="1.400" fill="#d4d4d4"/>
<rect x="20" y="479" width="4" height="1.400" fill="#9cdcfe"/>
<rect x="25" y="479" width="2" height="1.400" fill="#dcdcaa"/>
<rect x="28" y="479" width="12" height="1.400" fill="#ce9178"/>
<rect x="41" y="479" width="2" height="1.400" fill="#dcdcaa"/>
<rect x="44" y="479" width="4" height="1.400" fill="#dcdcaa"/>
<rect x="48" y="479" width="1" height="1.400" fill="#d4d4d4"/>
<rect x="20" y="481" width="5" height="1.400" fill="#c586c0"/>
<rect x="25" y="481" width="1" height="1.400" fill="#d4d4d4"/>
<rect x="16" y="483" width="1" height="1.400" fill="#179fff"/>
<rect x="12" y="485" width="1" height="1.400" fill="#da70d6"/>
<rect x="8" y="487" width="1" height="1.400" fill="#ffd700"/>
<rect x="12" y="491" width="4" height="1.400" fill="#c586c0"/>
<rect x="17" y="491" width="1" height="1.400" fill="#ffd700"/>
<rect x="18" y="491" width="3" height="1.400" fill="#ce9178"/>
<rect x="21" y="491" width="1" height="1.400" fill="#ffd700"/>
<rect x="22" y="491" width="1" height="1.400" fill="#d4d4d4"/>
<rect x="12" y="493" width="1" height="1.400" fill="#ffd700"/>
<rect x="16" y="495" width="2" height="1.400" fill="#c586c0"/>
<rect x="19" y="495" width="1" height="1.400" fill="#da70d6"/>
<rect x="20" y="495" width="1" height="1.400" fill="#d4d4d4"/>
<rect x="21" y="495" width="4" height="1.400" fill="#569cd6"/>
<rect x="25" y="495" width="2" height="1.400" fill="#d4d4d4"/>
<rect x="27" y="495" width="7" height="1.400" fill="#dcdcaa"/>
<rect x="34" y="495" width="2" height="1.400" fill="#179fff"/>
<rect x="36" y="495" width="1" height="1.400" fill="#da70d6"/>
<rect x="16" y="497" width="1" height="1.400" fill="#da70d6"/>
<rect x="20" y="499" width="4" height="1.400" fill="#9cdcfe"/>
<rect x="25" y="499" width="2" height="1.400" fill="#dcdcaa"/>
<rect x="28" y="499" width="16" height="1.400" fill="#ce9178"/>
<rect x="45" y="499" width="2" height="1.400" fill="#dcdcaa"/>
<rect x="48" y="499" width="4" height="1.400" fill="#dcdcaa"/>
<rect x="52" y="499" width="1" height="1.400" fill="#d4d4d4"/>
<rect x="20" y="501" width="4" height="1.400" fill="#9cdcfe"/>
<rect x="25" y="501" width="2" height="1.400" fill="#dcdcaa"/>
<rect x="28" y="501" width="25" height="1.400" fill="#ce9178"/>
<rect x="54" y="501" width="2" height="1.400" fill="#dcdcaa"/>
<rect x="57" y="501" width="4" height="1.400" fill="#dcdcaa"/>
<rect x="61" y="501" width="1" height="1.400" fill="#d4d4d4"/>
<rect x="20" y="503" width="5" height="1.400" fill="#c586c0"/>
<rect x="25" y="503" width="1" height="1.400" fill="#d4d4d4"/>
<rect x="16" y="505" width="1" height="1.400" fill="#da70d6"/>
<rect x="16" y="507" width="6" height="1.400" fill="#4ec9b0"/>
<rect x="23" y="507" width="4" height="1.400" fill="#9cdcfe"/>
<rect x="27" y="507" width="1" height="1.400" fill="#d4d4d4"/>
<rect x="29" y="507" width="7" height="1.400" fill="#9cdcfe"/>
<rect x="36" y="507" width="1" height="1.400" fill="#d4d4d4"/>
<rect x="16" y="509" width="4" height="1.400" fill="#9cdcfe"/>
<rect x="21" y="509" width="2" height="1.400" fill="#dcdcaa"/>
<rect x="24" y="509" width="19" height="1.400" fill="#ce9178"/>
<rect x="16" y="511" width="3" height="1.400" fill="#9cdcfe"/>
<rect x="20" y="511" width="2" height="1.400" fill="#dcdcaa"/>
<rect x="23" y="511" width="5" height="1.400" fill="#9cdcfe"/>
<rect x="28" y="511" width="1" height="1.400" fill="#d4d4d4"/>
<rect x="8" y="513" width="1" height="1.400" fill="#ffd700"/>
<rect x="8" y="517" width="4" height="1.400" fill="#569cd6"/>
<rect x="13" y="517" width="21" height="1.400" fill="#4ec9b0"/>
<rect x="34" y="517" width="2" height="1.400" fill="#d4d4d4"/>
<rect x="36" y="517" width="7" height="1.400" fill="#dcdcaa"/>
<rect x="43" y="517" width="2" height="1.400" fill="#ffd700"/>
<rect x="8" y="519" width="1" height="1.400" fill="#ffd700"/>
<rect x="12" y="521" width="5" height="1.400" fill="#c586c0"/>
<rect x="18" y="521" width="1" height="1.400" fill="#da70d6"/>
<rect x="19" y="521" width="4" height="1.400" fill="#569cd6"/>
<rect x="23" y="521" width="1" height="1.400" fill="#da70d6"/>
<rect x="12" y="523" width="1" height="1.400" fill="#da70d6"/>
<rect x="16" y="525" width="4" height="1.400" fill="#9cdcfe"/>
<rect x="21" y="525" width="2" height="1.400" fill="#dcdcaa"/>
<rect x="24" y="525" width="32" height="1.400" fill="#ce9178"/>
<rect x="57" y="525" width="2" height="1.400" fill="#dcdcaa"/>
<rect x="60" y="525" width="4" height="1.400" fill="#dcdcaa"/>
<rect x="64" y="525" width="1" height="1.400" fill="#d4d4d4"/>
<rect x="16" y="527" width="4" height="1.400" fill="#9cdcfe"/>
<rect x="21" y="527" width="2" height="1.400" fill="#dcdcaa"/>
<rect x="24" y="527" width="24" height="1.400" fill="#ce9178"/>
<rect x="49" y="527" width="2" height="1.400" fill="#dcdcaa"/>
<rect x="52" y="527" width="4" height="1.400" fill="#dcdcaa"/>
<rect x="56" y="527" width="1" height="1.400" fill="#d4d4d4"/>
<rect x="16" y="529" width="4" height="1.400" fill="#9cdcfe"/>
<rect x="21" y="529" width="2" height="1.400" fill="#dcdcaa"/>
<rect x="24" y="529" width="32" height="1.400" fill="#ce9178"/>
<rect x="57" y="529" width="2" height="1.400" fill="#dcdcaa"/>
<rect x="60" y="529" width="4" height="1.400" fill="#dcdcaa"/>
<rect x="64" y="529" width="1" height="1.400" fill="#d4d4d4"/>
<rect x="8" y="531" width="4" height="1.400" fill="#569cd6"/>
<rect x="13" y="531" width="21" height="1.400" fill="#4ec9b0"/>
<rect x="34" y="531" width="2" height="1.400" fill="#d4d4d4"/>
<rect x="36" y="531" width="6" height="1.400" fill="#dcdcaa"/>
<rect x="42" y="531" width="2" height="1.400" fill="#ffd700"/>
<rect x="8" y="533" width="1" height="1.400" fill="#ffd700"/>
<rect x="12" y="535" width="5" height="1.400" fill="#c586c0"/>
<rect x="18" y="535" width="1" height="1.400" fill="#da70d6"/>
<rect x="19" y="535" width="4" height="1.400" fill="#569cd6"/>
<rect x="23" y="535" width="1" height="1.400" fill="#da70d6"/>
<rect x="12" y="537" width="1" height="1.400" fill="#da70d6"/>
<rect x="16" y="539" width="4" height="1.400" fill="#9cdcfe"/>
<rect x="21" y="539" width="2" height="1.400" fill="#dcdcaa"/>
<rect x="24" y="539" width="32" height="1.400" fill="#ce9178"/>
<rect x="57" y="539" width="2" height="1.400" fill="#dcdcaa"/>
<rect x="60" y="539" width="4" height="1.400" fill="#dcdcaa"/>
<rect x="64" y="539" width="1" height="1.400" fill="#d4d4d4"/>
<rect x="16" y="541" width="4" height="1.400" fill="#9cdcfe"/>
<rect x="21" y="541" width="2" height="1.400" fill="#dcdcaa"/>
<rect x="24" y="541" width="28" height="1.400" fill="#ce9178"/>
<rect x="53" y="541" width="2" height="1.400" fill="#dcdcaa"/>
<rect x="56" y="541" width="4" height="1.400" fill="#dcdcaa"/>
<rect x="60" y="541" width="1" height="1.400" fill="#d4d4d4"/>
<rect x="16" y="543" width="4" height="1.400" fill="#9cdcfe"/>
<rect x="21" y="543" width="2" height="1.400" fill="#dcdcaa"/>
<rect x="24" y="543" width="32" height="1.400" fill="#ce9178"/>
<rect x="57" y="543" width="2" height="1.400" fill="#dcdcaa"/>
<rect x="60" y="543" width="4" height="1.400" fill="#dcdcaa"/>
<rect x="64" y="543" width="1" height="1.400" fill="#d4d4d4"/>
<rect x="16" y="545" width="4" height="1.400" fill="#9cdcfe"/>
<rect x="21" y="545" width="2" height="1.400" fill="#dcdcaa"/>
<rect x="24" y="545" width="12" height="1.400" fill="#ce9178"/>
<rect x="37" y="545" width="2" height="1.400" fill="#dcdcaa"/>
<rect x="40" y="545" width="4" height="1.400" fill="#dcdcaa"/>
<rect x="44" y="545" width="1" height="1.400" fill="#d4d4d4"/>
<rect x="16" y="547" width="4" height="1.400" fill="#9cdcfe"/>
<rect x="21" y="547" width="2" height="1.400" fill="#dcdcaa"/>
<rect x="24" y="547" width="22" height="1.400" fill="#ce9178"/>
<rect x="47" y="547" width="2" height="1.400" fill="#dcdcaa"/>
<rect x="50" y="547" width="4" height="1.400" fill="#dcdcaa"/>
<rect x="54" y="547" width="1" height="1.400" fill="#d4d4d4"/>
<rect x="16" y="549" width="4" height="1.400" fill="#9cdcfe"/>
<rect x="21" y="549" width="2" height="1.400" fill="#dcdcaa"/>
<rect x="24" y="549" width="15" height="1.400" fill="#ce9178"/>
<rect x="40" y="549" width="2" height="1.400" fill="#dcdcaa"/>
<rect x="43" y="549" width="4" height="1.400" fill="#dcdcaa"/>
<rect x="47" y="549" width="1" height="1.400" fill="#d4d4d4"/>
<rect x="16" y="551" width="4" height="1.400" fill="#9cdcfe"/>
<rect x="21" y="551" width="2" height="1.400" fill="#dcdcaa"/>
<rect x="24" y="551" width="12" height="1.400" fill="#ce9178"/>
<rect x="37" y="551" width="2" height="1.400" fill="#dcdcaa"/>
<rect x="40" y="551" width="4" height="1.400" fill="#dcdcaa"/>
<rect x="44" y="551" width="1" height="1.400" fill="#d4d4d4"/>
<rect x="16" y="553" width="4" height="1.400" fill="#9cdcfe"/>
<rect x="21" y="553" width="2" height="1.400" fill="#dcdcaa"/>
<rect x="24" y="553" width="34" height="1.400" fill="#ce9178"/>
<rect x="16" y="555" width="4" height="1.400" fill="#569cd6"/>
<rect x="21" y="555" width="3" height="1.400" fill="#9cdcfe"/>
<rect x="25" y="555" width="1" height="1.400" fill="#d4d4d4"/>
<rect x="27" y="555" width="3" height="1.400" fill="#ce9178"/>
<rect x="30" y="555" width="1" height="1.400" fill="#d4d4d4"/>
<rect x="16" y="557" width="3" height="1.400" fill="#9cdcfe"/>
<rect x="20" y="557" width="2" height="1.400" fill="#dcdcaa"/>
<rect x="23" y="557" width="3" height="1.400" fill="#9cdcfe"/>
<rect x="26" y="557" width="1" height="1.400" fill="#d4d4d4"/>
<rect x="16" y="559" width="6" height="1.400" fill="#c586c0"/>
<rect x="23" y="559" width="1" height="1.400" fill="#179fff"/>
<rect x="24" y="559" width="3" height="1.400" fill="#9cdcfe"/>
<rect x="27" y="559" width="1" height="1.400" fill="#179fff"/>
<rect x="16" y="561" width="1" height="1.400" fill="#179fff"/>
<rect x="16" y="563" width="4" height="1.400" fill="#c586c0"/>
<rect x="21" y="563" width="1" height="1.400" fill="#ffd700"/>
<rect x="22" y="563" width="3" height="1.400" fill="#ce9178"/>
<rect x="25" y="563" width="1" height="1.400" fill="#ffd700"/>
<rect x="26" y="563" width="1" height="1.400" fill="#d4d4d4"/>
<rect x="20" y="565" width="4" height="1.400" fill="#569cd6"/>
<rect x="24" y="565" width="2" height="1.400" fill="#d4d4d4"/>
<rect x="26" y="565" width="20" height="1.400" fill="#dcdcaa"/>
<rect x="46" y="565" width="2" height="1.400" fill="#ffd700"/>
<rect x="48" y="565" width="1" height="1.400" fill="#d4d4d4"/>
<rect x="20" y="567" width="5" height="1.400" fill="#c586c0"/>
<rect x="25" y="567" width="1" height="1.400" fill="#d4d4d4"/>
<rect x="16" y="569" width="4" height="1.400" fill="#c586c0"/>
<rect x="21" y="569" width="1" height="1.400" fill="#ffd700"/>
<rect x="22" y="569" width="3" height="1.400" fill="#ce9178"/>
<rect x="25" y="569" width="1" height="1.400" fill="#ffd700"/>
<rect x="26" y="569" width="1" height="1.400" fill="#d4d4d4"/>
<rect x="20" y="571" width="4" height="1.400" fill="#569cd6"/>
<rect x="24" y="571" width="2" height="1.400" fill="#d4d4d4"/>
<rect x="26" y="571" width="22" height="1.400" fill="#dcdcaa"/>
<rect x="48" y="571" width="2" height="1.400" fill="#ffd700"/>
<rect x="50" y="571" width="1" height="1.400" fill="#d4d4d4"/>
<rect x="20" y="573" width="5" height="1.400" fill="#c586c0"/>
<rect x="25" y="573" width="1" height="1.400" fill="#d4d4d4"/>
<rect x="16" y="575" width="4" height="1.400" fill="#c586c0"/>
<rect x="21" y="575" width="1" height="1.400" fill="#ffd700"/>
<rect x="22" y="575" width="3" height="1.400" fill="#ce9178"/>
<rect x="25" y="575" width="1" height="1.400" fill="#ffd700"/>
<rect x="26" y="575" width="1" height="1.400" fill="#d4d4d4"/>
<rect x="20" y="577" width="4" height="1.400" fill="#569cd6"/>
<rect x="24" y="577" width="2" height="1.400" fill="#d4d4d4"/>
<rect x="26" y="577" width="20" height="1.400" fill="#dcdcaa"/>
<rect x="46" y="577" width="2" height="1.400" fill="#ffd700"/>
<rect x="48" y="577" width="1" height="1.400" fill="#d4d4d4"/>
<rect x="20" y="579" width="5" height="1.400" fill="#c586c0"/>
<rect x="25" y="579" width="1" height="1.400" fill="#d4d4d4"/>
<rect x="16" y="581" width="7" height="1.400" fill="#c586c0"/>
<rect x="23" y="581" width="1" height="1.400" fill="#d4d4d4"/>
<rect x="20" y="583" width="4" height="1.400" fill="#9cdcfe"/>
<rect x="25" y="583" width="2" height="1.400" fill="#dcdcaa"/>
<rect x="28" y="583" width="12" height="1.400" fill="#ce9178"/>
<rect x="41" y="583" width="2" height="1.400" fill="#dcdcaa"/>
<rect x="44" y="583" width="4" height="1.400" fill="#dcdcaa"/>
<rect x="48" y="583" width="1" height="1.400" fill="#d4d4d4"/>
<rect x="20" y="585" width="5" height="1.400" fill="#c586c0"/>
<rect x="25" y="585" width="1" height="1.400" fill="#d4d4d4"/>
<rect x="16" y="587" width="1" height="1.400" fill="#179fff"/>
<rect x="12" y="589" width="1" height="1.400" fill="#da70d6"/>
<rect x="8" y="591" width="1" height="1.400" fill="#ffd700"/>
<rect x="8" y="595" width="4" height="1.400" fill="#569cd6"/>
<rect x="13" y="595" width="21" height="1.400" fill="#4ec9b0"/>
<rect x="34" y="595" width="2" height="1.400" fill="#d4d4d4"/>
<rect x="36" y="595" width="4" height="1.400" fill="#dcdcaa"/>
<rect x="40" y="595" width="2" height="1.400" fill="#ffd700"/>
<rect x="8" y="597" width="1" height="1.400" fill="#ffd700"/>
<rect x="12" y="599" width="4" height="1.400" fill="#9cdcfe"/>
<rect x="17" y="599" width="2" height="1.400" fill="#dcdcaa"/>
<rect x="20" y="599" width="32" height="1.400" fill="#ce9178"/>
<rect x="53" y="599" width="2" height="1.400" fill="#dcdcaa"/>
<rect x="56" y="599" width="4" height="1.400" fill="#dcdcaa"/>
<rect x="60" y="599" width="1" height="1.400" fill="#d4d4d4"/>
<rect x="12" y="601" width="4" height="1.400" fill="#9cdcfe"/>
<rect x="17" y="601" width="2" height="1.400" fill="#dcdcaa"/>
<rect x="20" y="601" width="40" height="1.400" fill="#ce9178"/>
<rect x="61" y="601" width="2" height="1.400" fill="#dcdcaa"/>
<rect x="64" y="601" width="4" height="1.400" fill="#dcdcaa"/>
<rect x="68" y="601" width="1" height="1.400" fill="#d4d4d4"/>
<rect x="12" y="603" width="4" height="1.400" fill="#9cdcfe"/>
<rect x="17" y="603" width="2" height="1.400" fill="#dcdcaa"/>
<rect x="20" y="603" width="46" height="1.400" fill="#ce9178"/>
<rect x="67" y="603" width="2" height="1.400" fill="#dcdcaa"/>
<rect x="70" y="603" width="4" height="1.400" fill="#dcdcaa"/>
<rect x="74" y="603" width="1" height="1.400" fill="#d4d4d4"/>
<rect x="12" y="605" width="4" height="1.400" fill="#9cdcfe"/>
<rect x="17" y="605" width="2" height="1.400" fill="#dcdcaa"/>
<rect x="20" y="605" width="54" height="1.400" fill="#ce9178"/>
<rect x="75" y="605" width="2" height="1.400" fill="#dcdcaa"/>
<rect x="78" y="605" width="4" height="1.400" fill="#dcdcaa"/>
<rect x="82" y="605" width="1" height="1.400" fill="#d4d4d4"/>
<rect x="12" y="607" width="4" height="1.400" fill="#9cdcfe"/>
<rect x="17" y="607" width="2" height="1.400" fill="#dcdcaa"/>
<rect x="20" y="607" width="22" height="1.400" fill="#ce9178"/>
<rect x="43" y="607" width="2" height="1.400" fill="#dcdcaa"/>
<rect x="46" y="607" width="4" height="1.400" fill="#dcdcaa"/>
<rect x="50" y="607" width="1" height="1.400" fill="#d4d4d4"/>
<rect x="8" y="609" width="1" height="1.400" fill="#ffd700"/>
<rect x="8" y="613" width="4" height="1.400" fill="#569cd6"/>
<rect x="13" y="613" width="21" height="1.400" fill="#4ec9b0"/>
<rect x="34" y="613" width="2" height="1.400" fill="#d4d4d4"/>
<rect x="36" y="613" width="4" height="1.400" fill="#dcdcaa"/>
<rect x="40" y="613" width="2" height="1.400" fill="#ffd700"/>
<rect x="8" y="615" width="1" height="1.400" fill="#ffd700"/>
<rect x="12" y="617" width="4" height="1.400" fill="#569cd6"/>
<rect x="16" y="617" width="2" height="1.400" fill="#d4d4d4"/>
<rect x="18" y="617" width="11" height="1.400" fill="#9cdcfe"/>
<rect x="29" y="617" width="1" height="1.400" fill="#d4d4d4"/>
<rect x="30" y="617" width="4" height="1.400" fill="#dcdcaa"/>
<rect x="34" y="617" width="2" height="1.400" fill="#da70d6"/>
<rect x="8" y="619" width="1" height="1.400" fill="#ffd700"/>
<rect x="8" y="623" width="4" height="1.400" fill="#569cd6"/>
<rect x="13" y="623" width="21" height="1.400" fill="#4ec9b0"/>
<rect x="34" y="623" width="2" height="1.400" fill="#d4d4d4"/>
<rect x="36" y="623" width="4" height="1.400" fill="#dcdcaa"/>
<rect x="40" y="623" width="2" height="1.400" fill="#ffd700"/>
<rect x="8" y="625" width="1" height="1.400" fill="#ffd700"/>
<rect x="12" y="627" width="4" height="1.400" fill="#569cd6"/>
<rect x="16" y="627" width="2" height="1.400" fill="#d4d4d4"/>
<rect x="18" y="627" width="11" height="1.400" fill="#9cdcfe"/>
<rect x="29" y="627" width="1" height="1.400" fill="#d4d4d4"/>
<rect x="30" y="627" width="4" height="1.400" fill="#dcdcaa"/>
<rect x="34" y="627" width="2" height="1.400" fill="#da70d6"/>
<rect x="8" y="629" width="1" height="1.400" fill="#ffd700"/>
<rect x="8" y="633" width="2" height="1.400" fill="#6a9955"/>
<rect x="19" y="633" width="7" height="1.400" fill="#6a9955"/>
<rect x="27" y="633" width="4" height="1.400" fill="#6a9955"/>
<rect x="8" y="635" width="2" height="1.400" fill="#6a9955"/>
<rect x="23" y="635" width="4" height="1.400" fill="#6a9955"/>
<rect x="28" y="635" width="27" height="1.400" fill="#6a9955"/>
<rect x="8" y="637" width="2" height="1.400" fill="#6a9955"/>
<rect x="23" y="637" width="8" height="1.400" fill="#6a9955"/>
<rect x="32" y="637" width="28" height="1.400" fill="#6a9955"/>
<rect x="8" y="639" width="2" height="1.400" fill="#6a9955"/>
<rect x="27" y="639" width="6" height="1.400" fill="#6a9955"/>
<rect x="34" y="639" width="13" height="1.400" fill="#6a9955"/>
<rect x="8" y="641" width="2" height="1.400" fill="#6a9955"/>
<rect x="23" y="641" width="6" height="1.400" fill="#6a9955"/>
<rect x="30" y="641" width="22" height="1.400" fill="#6a9955"/>
<rect x="8" y="643" width="2" height="1.400" fill="#6a9955"/>
<rect x="19" y="643" width="8" height="1.400" fill="#6a9955"/>
<rect x="28" y="643" width="28" height="1.400" fill="#6a9955"/>
<rect x="8" y="645" width="2" height="1.400" fill="#6a9955"/>
<rect x="19" y="645" width="4" height="1.400" fill="#6a9955"/>
<rect x="24" y="645" width="29" height="1.400" fill="#6a9955"/>
<rect x="8" y="647" width="2" height="1.400" fill="#6a9955"/>
<rect x="11" y="647" width="6" height="1.400" fill="#6a9955"/>
<rect x="18" y="647" width="18" height="1.400" fill="#6a9955"/>
<rect x="8" y="649" width="2" height="1.400" fill="#6a9955"/>
<rect x="23" y="649" width="9" height="1.400" fill="#6a9955"/>
<rect x="33" y="649" width="5" height="1.400" fill="#6a9955"/>
<rect x="8" y="651" width="2" height="1.400" fill="#6a9955"/>
<rect x="11" y="651" width="9" height="1.400" fill="#6a9955"/>
<rect x="21" y="651" width="25" height="1.400" fill="#6a9955"/>
<rect x="8" y="653" width="2" height="1.400" fill="#6a9955"/>
<rect x="19" y="653" width="9" height="1.400" fill="#6a9955"/>
<rect x="29" y="653" width="21" height="1.400" fill="#6a9955"/>
<rect x="8" y="655" width="2" height="1.400" fill="#6a9955"/>
<rect x="23" y="655" width="10" height="1.400" fill="#6a9955"/>
<rect x="34" y="655" width="17" height="1.400" fill="#6a9955"/>
<rect x="8" y="657" width="2" height="1.400" fill="#6a9955"/>
<rect x="19" y="657" width="9" height="1.400" fill="#6a9955"/>
<rect x="29" y="657" width="15" height="1.400" fill="#6a9955"/>
<rect x="8" y="659" width="2" height="1.400" fill="#6a9955"/>
<rect x="23" y="659" width="6" height="1.400" fill="#6a9955"/>
<rect x="30" y="659" width="3" height="1.400" fill="#6a9955"/>
<rect x="8" y="661" width="2" height="1.400" fill="#6a9955"/>
<rect x="19" y="661" width="6" height="1.400" fill="#6a9955"/>
<rect x="26" y="661" width="8" height="1.400" fill="#6a9955"/>
<rect x="8" y="663" width="2" height="1.400" fill="#6a9955"/>
<rect x="23" y="663" width="4" height="1.400" fill="#6a9955"/>
<rect x="28" y="663" width="18" height="1.400" fill="#6a9955"/>
<rect x="8" y="665" width="2" height="1.400" fill="#6a9955"/>
<rect x="11" y="665" width="5" height="1.400" fill="#6a9955"/>
<rect x="17" y="665" width="27" height="1.400" fill="#6a9955"/>
<rect x="8" y="667" width="2" height="1.400" fill="#6a9955"/>
<rect x="19" y="667" width="5" height="1.400" fill="#6a9955"/>
<rect x="25" y="667" width="26" height="1.400" fill="#6a9955"/>
<rect x="8" y="669" width="2" height="1.400" fill="#6a9955"/>
<rect x="15" y="669" width="7" height="1.400" fill="#6a9955"/>
<rect x="23" y="669" width="15" height="1.400" fill="#6a9955"/>
<rect x="8" y="671" width="2" height="1.400" fill="#6a9955"/>
<rect x="27" y="671" width="7" height="1.400" fill="#6a9955"/>
<rect x="35" y="671" width="5" height="1.400" fill="#6a9955"/>
<rect x="8" y="673" width="2" height="1.400" fill="#6a9955"/>
<rect x="15" y="673" width="7" height="1.400" fill="#6a9955"/>
<rect x="23" y="673" width="15" height="1.400" fill="#6a9955"/>
<rect x="8" y="675" width="2" height="1.400" fill="#6a9955"/>
<rect x="23" y="675" width="6" height="1.400" fill="#6a9955"/>
<rect x="30" y="675" width="7" height="1.400" fill="#6a9955"/>
<rect x="8" y="677" width="2" height="1.400" fill="#6a9955"/>
<rect x="27" y="677" width="7" height="1.400" fill="#6a9955"/>
<rect x="35" y="677" width="30" height="1.400" fill="#6a9955"/>
<rect x="8" y="679" width="2" height="1.400" fill="#6a9955"/>
<rect x="23" y="679" width="6" height="1.400" fill="#6a9955"/>
<rect x="30" y="679" width="25" height="1.400" fill="#6a9955"/>
<rect x="8" y="681" width="2" height="1.400" fill="#6a9955"/>
<rect x="19" y="681" width="6" height="1.400" fill="#6a9955"/>
<rect x="26" y="681" width="24" height="1.400" fill="#6a9955"/>
<rect x="8" y="683" width="2" height="1.400" fill="#6a9955"/>
<rect x="19" y="683" width="5" height="1.400" fill="#6a9955"/>
<rect x="25" y="683" width="7" height="1.400" fill="#6a9955"/>
<rect x="8" y="685" width="2" height="1.400" fill="#6a9955"/>
<rect x="11" y="685" width="5" height="1.400" fill="#6a9955"/>
<rect x="17" y="685" width="7" height="1.400" fill="#6a9955"/>
<rect x="8" y="687" width="2" height="1.400" fill="#6a9955"/>
<rect x="15" y="687" width="9" height="1.400" fill="#6a9955"/>
<rect x="25" y="687" width="10" height="1.400" fill="#6a9955"/>
<rect x="8" y="689" width="2" height="1.400" fill="#6a9955"/>
<rect x="11" y="689" width="7" height="1.400" fill="#6a9955"/>
<rect x="19" y="689" width="29" height="1.400" fill="#6a9955"/>
<rect x="8" y="691" width="2" height="1.400" fill="#6a9955"/>
<rect x="23" y="691" width="5" height="1.400" fill="#6a9955"/>
<rect x="29" y="691" width="11" height="1.400" fill="#6a9955"/>
<rect x="8" y="693" width="2" height="1.400" fill="#6a9955"/>
<rect x="19" y="693" width="4" height="1.400" fill="#6a9955"/>
<rect x="24" y="693" width="7" height="1.400" fill="#6a9955"/>
<rect x="8" y="695" width="2" height="1.400" fill="#6a9955"/>
<rect x="19" y="695" width="8" height="1.400" fill="#6a9955"/>
<rect x="28" y="695" width="14" height="1.400" fill="#6a9955"/>
<rect x="8" y="697" width="2" height="1.400" fill="#6a9955"/>
<rect x="23" y="697" width="8" height="1.400" fill="#6a9955"/>
<rect x="32" y="697" width="13" height="1.400" fill="#6a9955"/>
<rect x="8" y="699" width="2" height="1.400" fill="#6a9955"/>
<rect x="15" y="699" width="9" height="1.400" fill="#6a9955"/>
<rect x="25" y="699" width="30" height="1.400" fill="#6a9955"/>
<rect x="8" y="701" width="2" height="1.400" fill="#6a9955"/>
<rect x="23" y="701" width="8" height="1.400" fill="#6a9955"/>
<rect x="32" y="701" width="23" height="1.400" fill="#6a9955"/>
<rect x="8" y="703" width="2" height="1.400" fill="#6a9955"/>
<rect x="23" y="703" width="9" height="1.400" fill="#6a9955"/>
<rect x="33" y="703" width="4" height="1.400" fill="#6a9955"/>
<rect x="8" y="705" width="2" height="1.400" fill="#6a9955"/>
<rect x="19" y="705" width="10" height="1.400" fill="#6a9955"/>
<rect x="30" y="705" width="27" height="1.400" fill="#6a9955"/>
<rect x="8" y="707" width="2" height="1.400" fill="#6a9955"/>
<rect x="27" y="707" width="9" height="1.400" fill="#6a9955"/>
<rect x="37" y="707" width="28" height="1.400" fill="#6a9955"/>
<rect x="8" y="711" width="4" height="1.400" fill="#569cd6"/>
<rect x="13" y="711" width="21" height="1.400" fill="#4ec9b0"/>
<rect x="34" y="711" width="2" height="1.400" fill="#d4d4d4"/>
<rect x="36" y="711" width="4" height="1.400" fill="#dcdcaa"/>
<rect x="40" y="711" width="2" height="1.400" fill="#ffd700"/>
<rect x="8" y="713" width="1" height="1.400" fill="#ffd700"/>
<rect x="12" y="715" width="4" height="1.400" fill="#9cdcfe"/>
<rect x="17" y="715" width="2" height="1.400" fill="#dcdcaa"/>
<rect x="20" y="715" width="32" height="1.400" fill="#ce9178"/>
<rect x="53" y="715" width="2" height="1.400" fill="#dcdcaa"/>
<rect x="56" y="715" width="4" height="1.400" fill="#dcdcaa"/>
<rect x="60" y="715" width="1" height="1.400" fill="#d4d4d4"/>
<rect x="12" y="717" width="4" height="1.400" fill="#9cdcfe"/>
<rect x="17" y="717" width="2" height="1.400" fill="#dcdcaa"/>
<rect x="20" y="717" width="32" height="1.400" fill="#ce9178"/>
<rect x="53" y="717" width="2" height="1.400" fill="#dcdcaa"/>
<rect x="56" y="717" width="4" height="1.400" fill="#dcdcaa"/>
<rect x="60" y="717" width="1" height="1.400" fill="#d4d4d4"/>
<rect x="12" y="719" width="4" height="1.400" fill="#9cdcfe"/>
<rect x="17" y="719" width="2" height="1.400" fill="#dcdcaa"/>
<rect x="20" y="719" width="32" height="1.400" fill="#ce9178"/>
<rect x="53" y="719" width="2" height="1.400" fill="#dcdcaa"/>
<rect x="56" y="719" width="4" height="1.400" fill="#dcdcaa"/>
<rect x="60" y="719" width="1" height="1.400" fill="#d4d4d4"/>
<rect x="12" y="721" width="4" height="1.400" fill="#9cdcfe"/>
<rect x="17" y="721" width="2" height="1.400" fill="#dcdcaa"/>
<rect x="20" y="721" width="32" height="1.400" fill="#ce9178"/>
<rect x="53" y="721" width="2" height="1.400" fill="#dcdcaa"/>
<rect x="56" y="721" width="4" height="1.400" fill="#dcdcaa"/>
<rect x="60" y="721" width="1" height="1.400" fill="#d4d4d4"/>
<rect x="12" y="723" width="4" height="1.400" fill="#9cdcfe"/>
<rect x="17" y="723" width="2" height="1.400" fill="#dcdcaa"/>
<rect x="20" y="723" width="32" height="1.400" fill="#ce9178"/>
<rect x="53" y="723" width="2" height="1.400" fill="#dcdcaa"/>
<rect x="56" y="723" width="4" height="1.400" fill="#dcdcaa"/>
<rect x="60" y="723" width="1" height="1.400" fill="#d4d4d4"/>
<rect x="12" y="725" width="4" height="1.400" fill="#9cdcfe"/>
<rect x="17" y="725" width="2" height="1.400" fill="#dcdcaa"/>
<rect x="20" y="725" width="32" height="1.400" fill="#ce9178"/>
<rect x="53" y="725" width="2" height="1.400" fill="#dcdcaa"/>
<rect x="56" y="725" width="4" height="1.400" fill="#dcdcaa"/>
<rect x="60" y="725" width="1" height="1.400" fill="#d4d4d4"/>
<rect x="8" y="727" width="1" height="1.400" fill="#ffd700"/>
<rect x="8" y="731" width="4" height="1.400" fill="#569cd6"/>
<rect x="13" y="731" width="21" height="1.400" fill="#4ec9b0"/>
<rect x="34" y="731" width="2" height="1.400" fill="#d4d4d4"/>
<rect x="36" y="731" width="4" height="1.400" fill="#dcdcaa"/>
<rect x="40" y="731" width="2" height="1.400" fill="#ffd700"/>
<rect x="8" y="733" width="1" height="1.400" fill="#ffd700"/>
<rect x="12" y="735" width="5" height="1.400" fill="#c586c0"/>
<rect x="18" y="735" width="1" height="1.400" fill="#da70d6"/>
<rect x="19" y="735" width="4" height="1.400" fill="#569cd6"/>
<rect x="23" y="735" width="1" height="1.400" fill="#da70d6"/>
<rect x="12" y="737" width="1" height="1.400" fill="#da70d6"/>
<rect x="16" y="739" width="4" height="1.400" fill="#9cdcfe"/>
<rect x="21" y="739" width="2" height="1.400" fill="#dcdcaa"/>
<rect x="24" y="739" width="32" height="1.400" fill="#ce9178"/>
<rect x="57" y="739" width="2" height="1.400" fill="#dcdcaa"/>
<rect x="60" y="739" width="4" height="1.400" fill="#dcdcaa"/>
<rect x="64" y="739" width="1" height="1.400" fill="#d4d4d4"/>
<rect x="16" y="741" width="4" height="1.400" fill="#9cdcfe"/>
<rect x="21" y="741" width="2" height="1.400" fill="#dcdcaa"/>
<rect x="24" y="741" width="23" height="1.400" fill="#ce9178"/>
<rect x="48" y="741" width="2" height="1.400" fill="#dcdcaa"/>
<rect x="51" y="741" width="4" height="1.400" fill="#dcdcaa"/>
<rect x="55" y="741" width="1" height="1.400" fill="#d4d4d4"/>
<rect x="16" y="743" width="4" height="1.400" fill="#9cdcfe"/>
<rect x="21" y="743" width="2" height="1.400" fill="#dcdcaa"/>
<rect x="24" y="743" width="32" height="1.400" fill="#ce9178"/>
<rect x="57" y="743" width="2" height="1.400" fill="#dcdcaa"/>
<rect x="60" y="743" width="4" height="1.400" fill="#dcdcaa"/>
<rect x="64" y="743" width="1" height="1.400" fill="#d4d4d4"/>
<rect x="16" y="745" width="4" height="1.400" fill="#9cdcfe"/>
<rect x="21" y="745" width="2" height="1.400" fill="#dcdcaa"/>
<rect x="24" y="745" width="17" height="1.400" fill="#ce9178"/>
<rect x="42" y="745" width="2" height="1.400" fill="#dcdcaa"/>
<rect x="45" y="745" width="4" height="1.400" fill="#dcdcaa"/>
<rect x="49" y="745" width="1" height="1.400" fill="#d4d4d4"/>
<rect x="16" y="747" width="4" height="1.400" fill="#9cdcfe"/>
<rect x="21" y="747" width="2" height="1.400" fill="#dcdcaa"/>
<rect x="24" y="747" width="20" height="1.400" fill="#ce9178"/>
<rect x="45" y="747" width="2" height="1.400" fill="#dcdcaa"/>
<rect x="48" y="747" width="4" height="1.400" fill="#dcdcaa"/>
<rect x="52" y="747" width="1" height="1.400" fill="#d4d4d4"/>
<rect x="16" y="749" width="4" height="1.400" fill="#9cdcfe"/>
<rect x="21" y="749" width="2" height="1.400" fill="#dcdcaa"/>
<rect x="24" y="749" width="16" height="1.400" fill="#ce9178"/>
<rect x="41" y="749" width="2" height="1.400" fill="#dcdcaa"/>
<rect x="44" y="749" width="4" height="1.400" fill="#dcdcaa"/>
<rect x="48" y="749" width="1" height="1.400" fill="#d4d4d4"/>
<rect x="16" y="751" width="4" height="1.400" fill="#9cdcfe"/>
<rect x="21" y="751" width="2" height="1.400" fill="#dcdcaa"/>
<rect x="24" y="751" width="10" height="1.400" fill="#ce9178"/>
<rect x="35" y="751" width="2" height="1.400" fill="#dcdcaa"/>
<rect x="38" y="751" width="4" height="1.400" fill="#dcdcaa"/>
<rect x="42" y="751" width="1" height="1.400" fill="#d4d4d4"/>
<rect x="16" y="753" width="4" height="1.400" fill="#9cdcfe"/>
<rect x="21" y="753" width="2" height="1.400" fill="#dcdcaa"/>
<rect x="24" y="753" width="13" height="1.400" fill="#ce9178"/>
<rect x="38" y="753" width="2" height="1.400" fill="#dcdcaa"/>
<rect x="41" y="753" width="4" height="1.400" fill="#dcdcaa"/>
<rect x="45" y="753" width="1" height="1.400" fill="#d4d4d4"/>
<rect x="16" y="755" width="4" height="1.400" fill="#9cdcfe"/>
<rect x="21" y="755" width="2" height="1.400" fill="#dcdcaa"/>
<rect x="24" y="755" width="11" height="1.400" fill="#ce9178"/>
<rect x="36" y="755" width="2" height="1.400" fill="#dcdcaa"/>
<rect x="39" y="755" width="4" height="1.400" fill="#dcdcaa"/>
<rect x="43" y="755" width="1" height="1.400" fill="#d4d4d4"/>
<rect x="16" y="757" width="4" height="1.400" fill="#9cdcfe"/>
<rect x="21" y="757" width="2" height="1.400" fill="#dcdcaa"/>
<rect x="24" y="757" width="34" height="1.400" fill="#ce9178"/>
<rect x="16" y="759" width="4" height="1.400" fill="#569cd6"/>
<rect x="21" y="759" width="3" height="1.400" fill="#9cdcfe"/>
<rect x="25" y="759" width="1" height="1.400" fill="#d4d4d4"/>
<rect x="27" y="759" width="3" height="1.400" fill="#ce9178"/>
<rect x="30" y="759" width="1" height="1.400" fill="#d4d4d4"/>
<rect x="16" y="761" width="3" height="1.400" fill="#9cdcfe"/>
<rect x="20" y="761" width="2" height="1.400" fill="#dcdcaa"/>
<rect x="23" y="761" width="3" height="1.400" fill="#9cdcfe"/>
<rect x="26" y="761" width="1" height="1.400" fill="#d4d4d4"/>
<rect x="16" y="763" width="6" height="1.400" fill="#c586c0"/>
<rect x="23" y="763" width="1" height="1.400" fill="#179fff"/>
<rect x="24" y="763" width="3" height="1.400" fill="#9cdcfe"/>
<rect x="27" y="763" width="1" height="1.400" fill="#179fff"/>
<rect x="16" y="765" width="1" height="1.400" fill="#179fff"/>
<rect x="16" y="767" width="4" height="1.400" fill="#c586c0"/>
<rect x="21" y="767" width="1" height="1.400" fill="#ffd700"/>
<rect x="22" y="767" width="3" height="1.400" fill="#ce9178"/>
<rect x="25" y="767" width="1" height="1.400" fill="#ffd700"/>
<rect x="26" y="767" width="1" height="1.400" fill="#d4d4d4"/>
<rect x="20" y="769" width="4" height="1.400" fill="#569cd6"/>
<rect x="24" y="769" width="2" height="1.400" fill="#d4d4d4"/>
<rect x="26" y="769" width="12" height="1.400" fill="#dcdcaa"/>
<rect x="38" y="769" width="2" height="1.400" fill="#ffd700"/>
<rect x="40" y="769" width="1" height="1.400" fill="#d4d4d4"/>
<rect x="20" y="771" width="5" height="1.400" fill="#c586c0"/>
<rect x="25" y="771" width="1" height="1.400" fill="#d4d4d4"/>
<rect x="16" y="773" width="4" height="1.400" fill="#c586c0"/>
<rect x="21" y="773" width="1" height="1.400" fill="#ffd700"/>
<rect x="22" y="773" width="3" height="1.400" fill="#ce9178"/>
<rect x="25" y="773" width="1" height="1.400" fill="#ffd700"/>
<rect x="26" y="773" width="1" height="1.400" fill="#d4d4d4"/>
<rect x="20" y="775" width="4" height="1.400" fill="#569cd6"/>
<rect x="24" y="775" width="2" height="1.400" fill="#d4d4d4"/>
<rect x="26" y="775" width="12" height="1.400" fill="#dcdcaa"/>
<rect x="38" y="775" width="2" height="1.400" fill="#ffd700"/>
<rect x="40" y="775" width="1" height="1.400" fill="#d4d4d4"/>
<rect x="20" y="777" width="5" height="1.400" fill="#c586c0"/>
<rect x="25" y="777" width="1" height="1.400" fill="#d4d4d4"/>
<rect x="16" y="779" width="4" height="1.400" fill="#c586c0"/>
<rect x="21" y="779" width="1" height="1.400" fill="#ffd700"/>
<rect x="22" y="779" width="3" height="1.400" fill="#ce9178"/>
<rect x="25" y="779" width="1" height="1.400" fill="#ffd700"/>
<rect x="26" y="779" width="1" height="1.400" fill="#d4d4d4"/>
<rect x="20" y="781" width="4" height="1.400" fill="#569cd6"/>
<rect x="24" y="781" width="2" height="1.400" fill="#d4d4d4"/>
<rect x="26" y="781" width="12" height="1.400" fill="#dcdcaa"/>
<rect x="38" y="781" width="2" height="1.400" fill="#ffd700"/>
<rect x="40" y="781" width="1" height="1.400" fill="#d4d4d4"/>
<rect x="20" y="783" width="5" height="1.400" fill="#c586c0"/>
<rect x="25" y="783" width="1" height="1.400" fill="#d4d4d4"/>
<rect x="16" y="785" width="7" height="1.400" fill="#c586c0"/>
<rect x="23" y="785" width="1" height="1.400" fill="#d4d4d4"/>
<rect x="20" y="787" width="4" height="1.400" fill="#9cdcfe"/>
<rect x="25" y="787" width="2" height="1.400" fill="#dcdcaa"/>
<rect x="28" y="787" width="12" height="1.400" fill="#ce9178"/>
<rect x="41" y="787" width="2" height="1.400" fill="#dcdcaa"/>
<rect x="44" y="787" width="4" height="1.400" fill="#dcdcaa"/>
<rect x="48" y="787" width="1" height="1.400" fill="#d4d4d4"/>
<rect x="20" y="789" width="5" height="1.400" fill="#c586c0"/>
<rect x="25" y="789" width="1" height="1.400" fill="#d4d4d4"/>
<rect x="16" y="791" width="1" height="1.400" fill="#179fff"/>
<rect x="12" y="793" width="1" height="1.400" fill="#da70d6"/>
<rect x="8" y="795" width="1" height="1.400" fill="#ffd700"/>
</g></svg></div>
<div class="abs" style="left:1659px;top:131px;width:19px;height:799px;background:#1e1e1e;border-left:1px solid #343434"></div>
<div class="abs" style="left:1660.500px;top:149px;width:17.500px;height:30px;background:#454545"></div>
<div class="abs" style="left:1660.500px;top:163.300px;width:17.500px;height:3px;background:#8a8a8a"></div>
<div id="status">
<!-- branch -->
<svg style="left:25px;top:6px" width="18" height="22" viewBox="0 0 18 22" fill="none" stroke="#ffffff" stroke-width="1.500">
<circle cx="4.500" cy="3.700" r="2.600"/><circle cx="13.500" cy="7.300" r="2.600"/><circle cx="4.500" cy="17.700" r="2.600"/><path d="M4.500 6.300v8.800M13.500 9.900c0 3-2.500 3.300-5 3.300s-4 .6-4 2"/></svg>
<!-- sync -->
<svg style="left:126.100px;top:4.400px" width="24" height="24" viewBox="-12 -12 24 24" fill="none" stroke="#ffffff" stroke-width="1.500">
<path d="M-7.200 -2A7.500 7.500 0 0 1 7.500 0.800M4.300 -2l3.200 3.200 3.200-3.200"/><path d="M7.200 2A7.500 7.500 0 0 1 -7.500 -0.800M-10.700 2l3.200-3.200 3.200 3.200"/></svg>
<!-- error -->
<svg style="left:173.500px;top:7.100px" width="19" height="19" viewBox="0 0 19 19" fill="none" stroke="#ffffff" stroke-width="1.500"><circle cx="9.500" cy="9.500" r="8.500"/><path d="M5.900 5.900l7.200 7.200M13.100 5.900l-7.200 7.200"/></svg>
<!-- warning -->
<svg style="left:213.800px;top:6.300px" width="20" height="19" viewBox="0 0 20 19" fill="none" stroke="#ffffff" stroke-width="1.500" stroke-linejoin="round"><path d="M10 1.300l8.800 16.400H1.200z"/><path d="M10 6.800v5.800M10 14v1.900" stroke-width="1.700"/></svg>
<!-- debug-alt -->
<svg style="left:272.500px;top:8px" width="21" height="20" viewBox="0 0 40 40" fill="none" stroke="#ffffff" stroke-width="3" stroke-linejoin="round" stroke-linecap="round">
<path d="M14 12V2.500L38 17 23 26.500"/><ellipse cx="11" cy="29" rx="5.500" ry="6.800"/><path d="M6 26.500h10M1.500 21.500l4.400 3.600M20.500 21.500l-4.400 3.600M.8 29.500h4.600M16.500 29.500h4.600M1.500 37.500l4.400-3.500M20.500 37.500l-4.400-3.500" stroke-width="2.500"/></svg>
<!-- home -->
<svg style="left:319px;top:7.400px" width="18" height="18" viewBox="0 0 18 18" fill="none" stroke="#ffffff" stroke-width="1.600" stroke-linejoin="round"><path d="M.8 9.200L9 1.200l8.200 8"/><path d="M3.300 7.300V17h4v-5.500h3.400V17h4V7.300"/></svg>
<!-- info -->
<svg style="left:364px;top:7.500px" width="19" height="19" viewBox="0 0 19 19" fill="none" stroke="#ffffff" stroke-width="1.500"><circle cx="9.400" cy="9.400" r="8.400"/><path d="M9.400 8.300v5.800M9.400 4.800v2" stroke-width="1.900"/></svg>
<!-- tools -->
<svg style="left:598.800px;top:7.800px" width="18.400" height="18.400" viewBox="0 0 20 20" fill="none" stroke="#ffffff" stroke-width="1.600" stroke-linecap="round" stroke-linejoin="round">
<path d="M2 1.500l4 1.200 1.200 3.200 10.800 11-2.300 2.300-11-10.800L1.500 7.200.8 3z" stroke-width="1.300"/><path d="M12.200 7.600a4.200 4.200 0 0 1 5.600-5.300l-2.700 2.700.5 1.900 1.900.5 2.700-2.700a4.200 4.200 0 0 1-5.300 5.600L4.200 19.100 1.800 16.700z" stroke-width="1.300"/></svg>
<!-- gear -->
<svg style="left:924.500px;top:7.200px" width="19.500" height="19.500" viewBox="-20 -20 40 40" fill="none" stroke="#ffffff" stroke-width="4.200" stroke-linejoin="round"><path d="M-3.14 -11.79L-2.91 -16.95L2.91 -16.95L3.14 -11.79L6.12 -10.55L9.93 -14.04L14.04 -9.93L10.55 -6.12L11.79 -3.14L16.95 -2.91L16.95 2.91L11.79 3.14L10.55 6.12L14.04 9.93L9.93 14.04L6.12 10.55L3.14 11.79L2.91 16.95L-2.91 16.95L-3.14 11.79L-6.12 10.55L-9.93 14.04L-14.04 9.93L-10.55 6.12L-11.79 3.14L-16.95 2.91L-16.95 -2.91L-11.79 -3.14L-10.55 -6.12L-14.04 -9.93L-9.93 -14.04L-6.12 -10.55Z"/><circle cx="0" cy="0" r="4.500"/></svg>
<!-- bug -->
<svg style="left:1067.500px;top:7px" width="19" height="19" viewBox="0 0 19 19" fill="none" stroke="#ffffff" stroke-width="1.500" stroke-linecap="butt">
<ellipse cx="9.100" cy="9.300" rx="5.400" ry="7.700"/><path d="M4 6.200h10.200M3.600 7.900L0.300 3.600M14.600 7.900l3.300-4.300M3.600 10.400H-0.600M14.600 10.400h4.200M4 14.400L0.600 17.900M14.200 14.400l3.400 3.500"/></svg>
<!-- play -->
<svg style="left:1115px;top:8px" width="14" height="18" viewBox="0 0 14 18" fill="none" stroke="#ffffff" stroke-width="1.500" stroke-linejoin="round"><path d="M1 1.200v15.600L12.800 9z"/></svg>
<!-- feedback -->
<svg style="left:1592px;top:6px" width="20" height="21" viewBox="0 0 20 21" fill="none" stroke="#ffffff" stroke-width="1.500" stroke-linejoin="round"><path d="M5 5.500V2h13.300v9.600h-3.800l-2.700 2.500"/><circle cx="7.600" cy="10.300" r="3.100"/><path d="M.8 19.800c0-3.700 2.400-6 6.600-6s6.200 2.300 6.200 6"/></svg>
<!-- bell -->
<svg style="left:1638px;top:6.500px" width="17" height="21" viewBox="0 0 17 21" fill="none" stroke="#ffffff" stroke-width="1.500" stroke-linejoin="round"><path d="M2.300 15.500V8.200a6.200 6.200 0 0 1 12.400 0v7.300l1.500 1.200H.8z"/><path d="M6.300 17.300a2.200 2.200 0 0 0 4.400 0"/></svg>
</div>
<div class="t" style="left:49.86px;top:938.00px;font-size:18.5px;color:#ffffff;transform:scaleX(0.9446)">master</div>
<div class="t" style="left:198.60px;top:938.00px;font-size:18.5px;color:#ffffff;transform:scaleX(0.9000)">0</div>
<div class="t" style="left:239.00px;top:938.00px;font-size:18.5px;color:#ffffff;transform:scaleX(0.9000)">0</div>
<div class="t" style="left:388.54px;top:938.00px;font-size:18.5px;color:#ffffff;transform:scaleX(0.9607)">CMake:</div>
<div class="t" style="left:452.92px;top:938.00px;font-size:18.5px;color:#ffffff;transform:scaleX(0.9750)">[Debug]:</div>
<div class="t" style="left:525.62px;top:938.00px;font-size:18.5px;color:#ffffff;transform:scaleX(0.8830)">Ready</div>
<div class="t" style="left:624.37px;top:938.00px;font-size:18.5px;color:#ffffff;transform:scaleX(0.8311)">[GCC</div>
<div class="t" style="left:669.62px;top:938.00px;font-size:18.5px;color:#ffffff;transform:scaleX(0.8780)">12.2.0</div>
<div class="t" style="left:719.60px;top:938.00px;font-size:18.5px;color:#ffffff;transform:scaleX(0.9665)">x86_64-w64-mingw32]</div>
<div class="t" style="left:949.74px;top:938.00px;font-size:18.5px;color:#ffffff;transform:scaleX(0.9641)">Build</div>
<div class="t" style="left:1013.62px;top:938.00px;font-size:18.5px;color:#ffffff;transform:scaleX(0.9815)">[all]</div>
<div class="t" style="left:1156.54px;top:938.00px;font-size:18.5px;color:#ffffff;transform:scaleX(0.9598)">[Score-Management-System]</div>
<div class="t" style="left:1456.01px;top:938.00px;font-size:18.5px;color:#ffffff;transform:scaleX(0.9941)">C++</div>
<div class="t" style="left:1517.00px;top:938.00px;font-size:18.5px;color:#ffffff;transform:scaleX(0.9500)">Win32</div>
<div class="abs" style="left:0;top:961.500px;width:1678px;height:1.500px;background:#ffffff"></div>
<svg style="left:0;top:0" width="1678" height="963" viewBox="0 0 1678 963" fill="none" stroke="#e41b1f" stroke-width="5.500" stroke-linecap="round" stroke-linejoin="round">
<path d="M491.3 584.7C493.3 582.0 499.1 573.5 503.6 568.7C508.1 563.8 512.8 559.3 518.1 555.6C523.5 551.8 529.8 548.3 535.6 546.1C541.4 544.0 546.3 543.3 553.0 542.5C559.8 541.7 569.5 541.3 576.3 541.3C583.1 541.4 588.4 542.0 593.7 542.8C599.1 543.6 605.9 545.6 608.3 546.1"/>
<path d="M566.1 505.4C566.8 506.9 568.8 511.4 570.5 514.2C572.2 516.9 573.6 519.1 576.3 522.2C579.0 525.2 583.1 529.3 586.5 532.3C589.9 535.4 593.0 538.0 596.6 540.3C600.3 542.6 607.8 543.6 608.3 546.1C608.8 548.7 602.5 552.3 599.6 555.6C596.6 558.9 593.3 562.5 590.8 565.8C588.4 569.0 586.2 572.2 585.0 575.2C583.8 578.2 583.8 582.5 583.6 583.9"/>
<path d="M1132.1 792.5C1129.6 797.2 1122.1 811.4 1117.3 820.5C1112.5 829.6 1107.9 837.6 1103.2 847.0C1098.5 856.4 1093.1 867.8 1089.2 876.6C1085.3 885.4 1082.0 893.8 1079.9 900.0C1077.8 906.2 1077.5 910.4 1076.8 914.0C1076.1 917.6 1076.1 920.5 1076.0 921.8" stroke-width="5.200"/>
<path d="M1044.0 863.4C1046.6 867.4 1054.4 879.3 1059.6 887.5C1064.8 895.7 1072.6 908.3 1075.2 912.5"/>
<path d="M1120.4 877.4C1118.3 878.8 1112.6 882.0 1107.9 886.0C1103.2 890.0 1097.2 896.7 1092.3 901.6C1087.4 906.5 1080.6 913.3 1078.3 915.6"/>
<path d="M1076.6 921.6C1075.3 921.7 1071.2 921.1 1068.8 922.2C1066.4 923.3 1064.0 925.3 1062.2 928.1C1060.4 930.9 1058.6 935.8 1057.7 939.2C1056.8 942.6 1056.4 945.9 1056.7 948.4C1057.0 950.9 1057.8 952.7 1059.6 954.3C1061.4 955.9 1064.7 957.1 1067.5 957.9C1070.3 958.7 1073.5 958.9 1076.6 958.9C1079.6 958.9 1082.8 958.7 1085.8 957.6C1088.8 956.5 1092.2 954.5 1094.3 952.3C1096.4 950.1 1097.7 947.3 1098.2 944.5C1098.8 941.7 1098.4 938.1 1097.6 935.3C1096.8 932.5 1095.3 929.6 1093.6 927.5C1091.8 925.4 1089.5 923.8 1087.1 922.9C1084.7 922.0 1081.0 922.0 1079.2 922.2C1077.5 922.4 1077.0 923.9 1076.6 924.2" stroke-width="5.600"/>
</svg>

</div>
</body>
</html>
